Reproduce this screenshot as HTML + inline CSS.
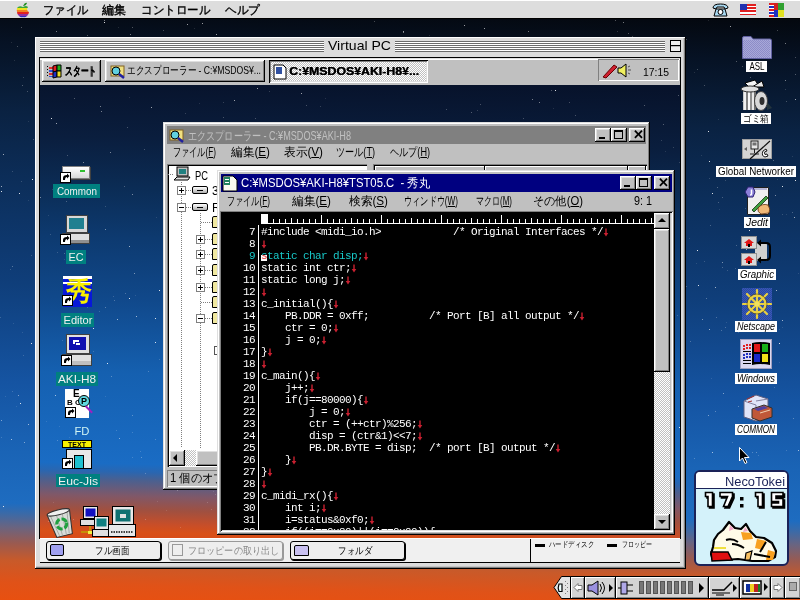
<!DOCTYPE html><html><head><meta charset="utf-8"><style>
*{margin:0;padding:0;box-sizing:border-box}
html,body{width:800px;height:600px;overflow:hidden}
body{position:relative;font-family:"Liberation Sans",sans-serif;font-size:12px;color:#000;
background:linear-gradient(181.3deg,#04080f 0px,#04080f 20px,#061224 60px,#0a2242 130px,#0c2e5a 200px,#0f3e7a 300px,#1554a2 400px,#1a64b6 470px,#1e6cc0 521px,#3a6aa8 531px,#6a6480 545px,#9a5a50 561px,#c85a2a 578px,#e05218 600px,#e85010 618px)}
.a{position:absolute}
.t{position:absolute;white-space:nowrap;line-height:1}
.fit{transform-origin:0 50%}
.fc{position:absolute;left:50%;top:0;white-space:nowrap;transform-origin:50% 50%;transform:translateX(-50%)}
.win{position:absolute;background:#c0c0c0;box-shadow:inset -1px -1px #000,inset 1px 1px #dfdfdf,inset -2px -2px #808080,inset 2px 2px #fff}
.btn{position:absolute;background:#c0c0c0;box-shadow:inset -1px -1px #000,inset 1px 1px #fff,inset -2px -2px #808080,inset 2px 2px #dfdfdf}
.tb{position:absolute;width:16px;height:14px;background:#c0c0c0;box-shadow:inset -1px -1px #000,inset 1px 1px #fff,inset -2px -2px #808080,inset 2px 2px #dfdfdf}
.lbl{position:absolute;background:#008080;color:#f0f0f0;font-size:11px;line-height:14px;white-space:nowrap}
.mlbl{position:absolute;background:#fff;color:#000;font-size:10px;line-height:11px;white-space:nowrap}
.ed{position:absolute;font-family:"Liberation Mono",monospace;font-size:11px;letter-spacing:-0.6px;line-height:12px;height:12px;color:#fff;white-space:pre}
.ln{position:absolute;width:33px;text-align:right;font-family:"Liberation Mono",monospace;font-size:11px;letter-spacing:-0.6px;line-height:12px;color:#fff;white-space:pre}
.c{color:#18c8c8}
.cs{position:absolute;top:577px;height:21px;background:#d4d4d4;box-shadow:inset 1px 1px #fff,inset -1px -1px #888}
</style></head><body><div class="a" style="left:0;top:0;width:1px;height:1px;box-shadow:331px 505px 0 rgba(255,255,255,0.45),404px 353px 0 rgba(255,255,255,0.3),74px 440px 0 rgba(255,255,255,0.3),374px 318px 0 rgba(255,255,255,0.3),519px 129px 0 rgba(255,255,255,0.3),88px 242px 0 rgba(255,255,255,0.85),71px 143px 0 rgba(255,255,255,0.3),564px 237px 0 rgba(255,255,255,0.3),579px 83px 0 rgba(255,255,255,0.45),645px 341px 0 rgba(255,255,255,0.3),590px 319px 0 rgba(255,255,255,0.85),50px 519px 0 rgba(255,255,255,0.45),47px 305px 0 rgba(255,255,255,0.45),296px 234px 0 rgba(255,255,255,0.45),553px 80px 0 rgba(255,255,255,0.6),573px 437px 0 rgba(255,255,255,0.45),105px 317px 0 rgba(255,255,255,0.45),381px 69px 0 rgba(255,255,255,0.3),577px 50px 0 rgba(255,255,255,0.45),508px 368px 0 rgba(255,255,255,0.85),795px 180px 0 rgba(255,255,255,0.85),599px 492px 0 rgba(255,255,255,0.85),370px 173px 0 rgba(255,255,255,0.45),184px 377px 0 rgba(255,255,255,0.45),83px 314px 0 rgba(255,255,255,0.6),537px 273px 0 rgba(255,255,255,0.6),746px 249px 0 rgba(255,255,255,0.6),623px 57px 0 rgba(255,255,255,0.3),524px 234px 0 rgba(255,255,255,0.45),775px 195px 0 rgba(255,255,255,0.45),500px 235px 0 rgba(255,255,255,0.3),684px 59px 0 rgba(255,255,255,0.6),348px 375px 0 rgba(255,255,255,0.6),608px 274px 0 rgba(255,255,255,0.85),70px 450px 0 rgba(255,255,255,0.3),276px 262px 0 rgba(255,255,255,0.3),62px 394px 0 rgba(255,255,255,0.6),662px 315px 0 rgba(255,255,255,0.85),291px 386px 0 rgba(255,255,255,0.85),684px 197px 0 rgba(255,255,255,0.3),472px 201px 0 rgba(255,255,255,0.45),625px 79px 0 rgba(255,255,255,0.85),60px 131px 0 rgba(255,255,255,0.6),132px 398px 0 rgba(255,255,255,0.45),407px 220px 0 rgba(255,255,255,0.85),82px 105px 0 rgba(255,255,255,0.85),411px 301px 0 rgba(255,255,255,0.6),140px 439px 0 rgba(255,255,255,0.85),563px 162px 0 rgba(255,255,255,0.85),367px 369px 0 rgba(255,255,255,0.85),236px 97px 0 rgba(255,255,255,0.3),180px 97px 0 rgba(255,255,255,0.45),674px 139px 0 rgba(255,255,255,0.3),496px 445px 0 rgba(255,255,255,0.45),269px 164px 0 rgba(255,255,255,0.3),149px 234px 0 rgba(255,255,255,0.6),624px 309px 0 rgba(255,255,255,0.6),128px 373px 0 rgba(255,255,255,0.3),467px 480px 0 rgba(255,255,255,0.85),407px 224px 0 rgba(255,255,255,0.85),106px 266px 0 rgba(255,255,255,0.85),63px 117px 0 rgba(255,255,255,0.3),213px 245px 0 rgba(255,255,255,0.45),112px 194px 0 rgba(255,255,255,0.3),104px 20px 0 rgba(255,255,255,0.45),549px 71px 0 rgba(255,255,255,0.6),628px 33px 0 rgba(255,255,255,0.3),212px 334px 0 rgba(255,255,255,0.85),152px 344px 0 rgba(255,255,255,0.6),355px 328px 0 rgba(255,255,255,0.6),485px 82px 0 rgba(255,255,255,0.3),499px 520px 0 rgba(255,255,255,0.85),491px 267px 0 rgba(255,255,255,0.6),87px 93px 0 rgba(255,255,255,0.3),767px 195px 0 rgba(255,255,255,0.6),490px 444px 0 rgba(255,255,255,0.45),528px 31px 0 rgba(255,255,255,0.45),540px 205px 0 rgba(255,255,255,0.45),706px 298px 0 rgba(255,255,255,0.3),776px 290px 0 rgba(255,255,255,0.6),658px 462px 0 rgba(255,255,255,0.3),712px 452px 0 rgba(255,255,255,0.6),530px 207px 0 rgba(255,255,255,0.45),364px 415px 0 rgba(255,255,255,0.45),545px 297px 0 rgba(255,255,255,0.6),651px 134px 0 rgba(255,255,255,0.45),245px 438px 0 rgba(255,255,255,0.85),757px 431px 0 rgba(255,255,255,0.45),204px 285px 0 rgba(255,255,255,0.85),364px 394px 0 rgba(255,255,255,0.3),28px 424px 0 rgba(255,255,255,0.6),483px 152px 0 rgba(255,255,255,0.45),709px 329px 0 rgba(255,255,255,0.6),457px 433px 0 rgba(255,255,255,0.6),373px 61px 0 rgba(255,255,255,0.45),104px 136px 0 rgba(255,255,255,0.85),201px 192px 0 rgba(255,255,255,0.45),494px 339px 0 rgba(255,255,255,0.3),490px 485px 0 rgba(255,255,255,0.6),658px 63px 0 rgba(255,255,255,0.3),397px 420px 0 rgba(255,255,255,0.45),489px 475px 0 rgba(255,255,255,0.45),444px 424px 0 rgba(255,255,255,0.6),88px 430px 0 rgba(255,255,255,0.85),474px 225px 0 rgba(255,255,255,0.3),742px 101px 0 rgba(255,255,255,0.45),130px 34px 0 rgba(255,255,255,0.45),604px 483px 0 rgba(255,255,255,0.85),671px 94px 0 rgba(255,255,255,0.85),673px 499px 0 rgba(255,255,255,0.6),159px 300px 0 rgba(255,255,255,0.45),21px 27px 0 rgba(255,255,255,0.3),539px 403px 0 rgba(255,255,255,0.45),444px 466px 0 rgba(255,255,255,0.45),216px 34px 0 rgba(255,255,255,0.6),217px 169px 0 rgba(255,255,255,0.45),782px 320px 0 rgba(255,255,255,0.6),265px 298px 0 rgba(255,255,255,0.85),134px 51px 0 rgba(255,255,255,0.6),469px 359px 0 rgba(255,255,255,0.85),513px 86px 0 rgba(255,255,255,0.45),536px 281px 0 rgba(255,255,255,0.3),450px 417px 0 rgba(255,255,255,0.45),623px 22px 0 rgba(255,255,255,0.45),176px 92px 0 rgba(255,255,255,0.85),633px 391px 0 rgba(255,255,255,0.3),569px 51px 0 rgba(255,255,255,0.6),698px 285px 0 rgba(255,255,255,0.85),795px 74px 0 rgba(255,255,255,0.3),254px 117px 0 rgba(255,255,255,0.6),43px 415px 0 rgba(255,255,255,0.3),519px 251px 0 rgba(255,255,255,0.3),778px 477px 0 rgba(255,255,255,0.3),453px 186px 0 rgba(255,255,255,0.45),709px 161px 0 rgba(255,255,255,0.85),520px 293px 0 rgba(255,255,255,0.85),519px 502px 0 rgba(255,255,255,0.45),715px 287px 0 rgba(255,255,255,0.6),572px 477px 0 rgba(255,255,255,0.45),458px 90px 0 rgba(255,255,255,0.85),124px 220px 0 rgba(255,255,255,0.85),323px 57px 0 rgba(255,255,255,0.45),438px 57px 0 rgba(255,255,255,0.45),685px 175px 0 rgba(255,255,255,0.3),795px 99px 0 rgba(255,255,255,0.6),146px 149px 0 rgba(255,255,255,0.45),478px 132px 0 rgba(255,255,255,0.3),407px 473px 0 rgba(255,255,255,0.85),166px 361px 0 rgba(255,255,255,0.45),165px 381px 0 rgba(255,255,255,0.85),527px 226px 0 rgba(255,255,255,0.6),431px 120px 0 rgba(255,255,255,0.6),326px 67px 0 rgba(255,255,255,0.6),19px 193px 0 rgba(255,255,255,0.85),451px 380px 0 rgba(255,255,255,0.3),393px 189px 0 rgba(255,255,255,0.6),524px 511px 0 rgba(255,255,255,0.3),115px 490px 0 rgba(255,255,255,0.45),107px 63px 0 rgba(255,255,255,0.6),278px 40px 0 rgba(255,255,255,0.45),276px 406px 0 rgba(255,255,255,0.45),432px 454px 0 rgba(255,255,255,0.6),415px 96px 0 rgba(255,255,255,0.85),717px 187px 0 rgba(255,255,255,0.3),285px 49px 0 rgba(255,255,255,0.45),435px 478px 0 rgba(255,255,255,0.3),275px 500px 0 rgba(255,255,255,0.3),649px 65px 0 rgba(255,255,255,0.6),85px 331px 0 rgba(255,255,255,0.45),68px 155px 0 rgba(255,255,255,0.3),464px 25px 0 rgba(255,255,255,0.6),566px 233px 0 rgba(255,255,255,0.6),636px 86px 0 rgba(255,255,255,0.3),539px 383px 0 rgba(255,255,255,0.45),112px 516px 0 rgba(255,255,255,0.45),268px 45px 0 rgba(255,255,255,0.45),206px 497px 0 rgba(255,255,255,0.6),643px 176px 0 rgba(255,255,255,0.45),296px 248px 0 rgba(255,255,255,0.45),277px 197px 0 rgba(255,255,255,0.3),256px 38px 0 rgba(255,255,255,0.3),18px 395px 0 rgba(255,255,255,0.45),526px 263px 0 rgba(255,255,255,0.45),457px 74px 0 rgba(255,255,255,0.85),672px 273px 0 rgba(255,255,255,0.85),518px 177px 0 rgba(255,255,255,0.45),235px 195px 0 rgba(255,255,255,0.45),723px 393px 0 rgba(255,255,255,0.45),414px 197px 0 rgba(255,255,255,0.3),132px 27px 0 rgba(255,255,255,0.3),640px 399px 0 rgba(255,255,255,0.6),441px 103px 0 rgba(255,255,255,0.3),86px 360px 0 rgba(255,255,255,0.85),518px 363px 0 rgba(255,255,255,0.6),613px 144px 0 rgba(255,255,255,0.6),46px 255px 0 rgba(255,255,255,0.45),161px 157px 0 rgba(255,255,255,0.85),3px 154px 0 rgba(255,255,255,0.6),336px 517px 0 rgba(255,255,255,0.6),250px 37px 0 rgba(255,255,255,0.6),223px 202px 0 rgba(255,255,255,0.45),1px 191px 0 rgba(255,255,255,0.85),85px 263px 0 rgba(255,255,255,0.6),514px 355px 0 rgba(255,255,255,0.45),254px 278px 0 rgba(255,255,255,0.3),93px 155px 0 rgba(255,255,255,0.3),147px 224px 0 rgba(255,255,255,0.3),403px 31px 0 rgba(255,255,255,0.6),311px 342px 0 rgba(255,255,255,0.45),86px 319px 0 rgba(255,255,255,0.45),673px 477px 0 rgba(255,255,255,0.85),782px 186px 0 rgba(255,255,255,0.85),153px 165px 0 rgba(255,255,255,0.45),44px 442px 0 rgba(255,255,255,0.85),751px 378px 0 rgba(255,255,255,0.45),536px 405px 0 rgba(255,255,255,0.3),702px 319px 0 rgba(255,255,255,0.45),87px 35px 0 rgba(255,255,255,0.3),136px 346px 0 rgba(255,255,255,0.6),107px 212px 0 rgba(255,255,255,0.85),571px 45px 0 rgba(255,255,255,0.3),641px 292px 0 rgba(255,255,255,0.45),501px 155px 0 rgba(255,255,255,0.3),467px 428px 0 rgba(255,255,255,0.3),766px 497px 0 rgba(255,255,255,0.3),675px 289px 0 rgba(255,255,255,0.3),763px 397px 0 rgba(255,255,255,0.85),258px 434px 0 rgba(255,255,255,0.3),271px 140px 0 rgba(255,255,255,0.45),236px 398px 0 rgba(255,255,255,0.85),505px 452px 0 rgba(255,255,255,0.85),78px 265px 0 rgba(255,255,255,0.6),785px 43px 0 rgba(255,255,255,0.45),79px 327px 0 rgba(255,255,255,0.45),339px 150px 0 rgba(255,255,255,0.6),636px 310px 0 rgba(255,255,255,0.45),12px 266px 0 rgba(255,255,255,0.3),497px 157px 0 rgba(255,255,255,0.3),708px 131px 0 rgba(255,255,255,0.85),297px 382px 0 rgba(255,255,255,0.6),475px 258px 0 rgba(255,255,255,0.85),785px 80px 0 rgba(255,255,255,0.45),319px 520px 0 rgba(255,255,255,0.3),484px 28px 0 rgba(255,255,255,0.6),469px 59px 0 rgba(255,255,255,0.85),275px 218px 0 rgba(255,255,255,0.45),215px 58px 0 rgba(255,255,255,0.3),145px 402px 0 rgba(255,255,255,0.6),368px 87px 0 rgba(255,255,255,0.6),115px 380px 0 rgba(255,255,255,0.6),236px 274px 0 rgba(255,255,255,0.85),403px 32px 0 rgba(255,255,255,0.45),3px 506px 0 rgba(255,255,255,0.85),697px 250px 0 rgba(255,255,255,0.85),309px 392px 0 rgba(255,255,255,0.45),426px 196px 0 rgba(255,255,255,0.85),323px 81px 0 rgba(255,255,255,0.6),1px 186px 0 rgba(255,255,255,0.6),407px 81px 0 rgba(255,255,255,0.45),730px 26px 0 rgba(255,255,255,0.6),259px 210px 0 rgba(255,255,255,0.3),402px 219px 0 rgba(255,255,255,0.3),369px 493px 0 rgba(255,255,255,0.85),773px 160px 0 rgba(255,255,255,0.3),287px 72px 0 rgba(255,255,255,0.3),677px 166px 0 rgba(255,255,255,0.45),255px 517px 0 rgba(255,255,255,0.6),446px 281px 0 rgba(255,255,255,0.6),194px 415px 0 rgba(255,255,255,0.6),438px 472px 0 rgba(255,255,255,0.3),779px 343px 0 rgba(255,255,255,0.85),567px 301px 0 rgba(255,255,255,0.45),736px 61px 0 rgba(255,255,255,0.3),749px 230px 0 rgba(255,255,255,0.85),629px 405px 0 rgba(255,255,255,0.45),659px 465px 0 rgba(255,255,255,0.6),497px 45px 0 rgba(255,255,255,0.45),174px 261px 0 rgba(255,255,255,0.85),351px 164px 0 rgba(255,255,255,0.6),261px 398px 0 rgba(255,255,255,0.6),415px 355px 0 rgba(255,255,255,0.45),308px 267px 0 rgba(255,255,255,0.85),122px 105px 0 rgba(255,255,255,0.45),76px 126px 0 rgba(255,255,255,0.85),563px 132px 0 rgba(255,255,255,0.85),340px 408px 0 rgba(255,255,255,0.85),437px 91px 0 rgba(255,255,255,0.45),249px 66px 0 rgba(255,255,255,0.45),350px 304px 0 rgba(255,255,255,0.3),326px 142px 0 rgba(255,255,255,0.6),264px 434px 0 rgba(255,255,255,0.45),20px 403px 0 rgba(255,255,255,0.85),392px 231px 0 rgba(255,255,255,0.45),385px 158px 0 rgba(255,255,255,0.6),770px 51px 0 rgba(255,255,255,0.85),284px 314px 0 rgba(255,255,255,0.6),128px 371px 0 rgba(255,255,255,0.45),94px 158px 0 rgba(255,255,255,0.45),393px 224px 0 rgba(255,255,255,0.85),442px 508px 0 rgba(255,255,255,0.6),22px 85px 0 rgba(255,255,255,0.3),435px 383px 0 rgba(255,255,255,0.85),601px 270px 0 rgba(255,255,255,0.3),74px 220px 0 rgba(255,255,255,0.85),459px 147px 0 rgba(255,255,255,0.3),229px 99px 0 rgba(255,255,255,0.45),534px 517px 0 rgba(255,255,255,0.3),739px 378px 0 rgba(255,255,255,0.85),87px 302px 0 rgba(255,255,255,0.3),1px 420px 0 rgba(255,255,255,0.45),238px 311px 0 rgba(255,255,255,0.3),660px 386px 0 rgba(255,255,255,0.6),131px 340px 0 rgba(255,255,255,0.6),540px 345px 0 rgba(255,255,255,0.85),715px 411px 0 rgba(255,255,255,0.3),101px 56px 0 rgba(255,255,255,0.6),537px 503px 0 rgba(255,255,255,0.45),397px 153px 0 rgba(255,255,255,0.45),615px 20px 0 rgba(255,255,255,0.3),550px 174px 0 rgba(255,255,255,0.85),285px 510px 0 rgba(255,255,255,0.6),660px 449px 0 rgba(255,255,255,0.45),486px 289px 0 rgba(255,255,255,0.45),560px 146px 0 rgba(255,255,255,0.3),421px 380px 0 rgba(255,255,255,0.6),56px 31px 0 rgba(255,255,255,0.45),510px 473px 0 rgba(255,255,255,0.85),83px 151px 0 rgba(255,255,255,0.45),683px 237px 0 rgba(255,255,255,0.6),232px 272px 0 rgba(255,255,255,0.3),712px 193px 0 rgba(255,255,255,0.85),371px 369px 0 rgba(255,255,255,0.85),202px 23px 0 rgba(255,255,255,0.6),756px 452px 0 rgba(255,255,255,0.3),210px 273px 0 rgba(255,255,255,0.45),319px 412px 0 rgba(255,255,255,0.45),236px 258px 0 rgba(255,255,255,0.45),271px 409px 0 rgba(255,255,255,0.6),111px 507px 0 rgba(255,255,255,0.85),624px 115px 0 rgba(255,255,255,0.45),496px 233px 0 rgba(255,255,255,0.3),609px 94px 0 rgba(255,255,255,0.85),55px 129px 0 rgba(255,255,255,0.3),610px 92px 0 rgba(255,255,255,0.85),53px 383px 0 rgba(255,255,255,0.3),188px 221px 0 rgba(255,255,255,0.85),729px 472px 0 rgba(255,255,255,0.6),750px 77px 0 rgba(255,255,255,0.3),169px 188px 0 rgba(255,255,255,0.45),189px 354px 0 rgba(255,255,255,0.85),32px 179px 0 rgba(255,255,255,0.85),382px 189px 0 rgba(255,255,255,0.85),173px 75px 0 rgba(255,255,255,0.3),80px 163px 0 rgba(255,255,255,0.3),359px 235px 0 rgba(255,255,255,0.3),574px 513px 0 rgba(255,255,255,0.45),389px 202px 0 rgba(255,255,255,0.6),442px 64px 0 rgba(255,255,255,0.3),722px 262px 0 rgba(255,255,255,0.45),381px 297px 0 rgba(255,255,255,0.85),197px 185px 0 rgba(255,255,255,0.6),755px 479px 0 rgba(255,255,255,0.85),31px 343px 0 rgba(255,255,255,0.85),253px 435px 0 rgba(255,255,255,0.85),41px 212px 0 rgba(255,255,255,0.3),475px 52px 0 rgba(255,255,255,0.3),263px 119px 0 rgba(255,255,255,0.3),620px 193px 0 rgba(255,255,255,0.6),278px 191px 0 rgba(255,255,255,0.3),268px 402px 0 rgba(255,255,255,0.6),282px 172px 0 rgba(255,255,255,0.3),738px 406px 0 rgba(255,255,255,0.3),24px 442px 0 rgba(255,255,255,0.45),109px 263px 0 rgba(255,255,255,0.85),794px 217px 0 rgba(255,255,255,0.6),440px 437px 0 rgba(255,255,255,0.85),135px 495px 0 rgba(255,255,255,0.85),187px 24px 0 rgba(255,255,255,0.6),708px 415px 0 rgba(255,255,255,0.45),621px 140px 0 rgba(255,255,255,0.6),327px 255px 0 rgba(255,255,255,0.6),610px 60px 0 rgba(255,255,255,0.45),401px 405px 0 rgba(255,255,255,0.45),253px 228px 0 rgba(255,255,255,0.3),665px 37px 0 rgba(255,255,255,0.85),565px 298px 0 rgba(255,255,255,0.6),164px 238px 0 rgba(255,255,255,0.3),73px 155px 0 rgba(255,255,255,0.3),213px 69px 0 rgba(255,255,255,0.85),510px 383px 0 rgba(255,255,255,0.85),177px 139px 0 rgba(255,255,255,0.45),426px 255px 0 rgba(255,255,255,0.45),765px 295px 0 rgba(255,255,255,0.3),798px 450px 0 rgba(255,255,255,0.6),300px 163px 0 rgba(255,255,255,0.6),381px 150px 0 rgba(255,255,255,0.6),203px 244px 0 rgba(255,255,255,0.45),190px 145px 0 rgba(255,255,255,0.45),157px 164px 0 rgba(255,255,255,0.45),334px 53px 0 rgba(255,255,255,0.85),257px 145px 0 rgba(255,255,255,0.45),665px 433px 0 rgba(255,255,255,0.3),669px 257px 0 rgba(255,255,255,0.3),104px 22px 0 rgba(255,255,255,0.85),236px 450px 0 rgba(255,255,255,0.85),382px 40px 0 rgba(255,255,255,0.6),238px 81px 0 rgba(255,255,255,0.3),194px 327px 0 rgba(255,255,255,0.45),76px 210px 0 rgba(255,255,255,0.45),459px 328px 0 rgba(255,255,255,0.6),793px 418px 0 rgba(255,255,255,0.3),108px 346px 0 rgba(255,255,255,0.6),222px 39px 0 rgba(255,255,255,0.6),348px 92px 0 rgba(255,255,255,0.3),208px 150px 0 rgba(255,255,255,0.3),613px 394px 0 rgba(255,255,255,0.45),11px 439px 0 rgba(255,255,255,0.6),418px 367px 0 rgba(255,255,255,0.6),189px 337px 0 rgba(255,255,255,0.6),79px 124px 0 rgba(255,255,255,0.3)"></div><div class="a" style="left:0;top:0;width:1px;height:1px;box-shadow:232px 209px 0 rgba(255,255,255,0.18),129px 118px 0 rgba(255,255,255,0.25),44px 63px 0 rgba(255,255,255,0.12),253px 435px 0 rgba(255,255,255,0.25),214px 225px 0 rgba(255,255,255,0.25),31px 255px 0 rgba(255,255,255,0.18),464px 219px 0 rgba(255,255,255,0.18),586px 118px 0 rgba(255,255,255,0.18),91px 268px 0 rgba(255,255,255,0.12),777px 30px 0 rgba(255,255,255,0.25),273px 286px 0 rgba(255,255,255,0.18),485px 214px 0 rgba(255,255,255,0.25),116px 359px 0 rgba(255,255,255,0.18),99px 436px 0 rgba(255,255,255,0.12),395px 337px 0 rgba(255,255,255,0.18),110px 358px 0 rgba(255,255,255,0.12),346px 140px 0 rgba(255,255,255,0.25),88px 274px 0 rgba(255,255,255,0.25),529px 126px 0 rgba(255,255,255,0.25),145px 330px 0 rgba(255,255,255,0.12),552px 39px 0 rgba(255,255,255,0.18),718px 119px 0 rgba(255,255,255,0.12),592px 253px 0 rgba(255,255,255,0.25),598px 471px 0 rgba(255,255,255,0.18),292px 305px 0 rgba(255,255,255,0.18),436px 89px 0 rgba(255,255,255,0.12),782px 327px 0 rgba(255,255,255,0.12),544px 373px 0 rgba(255,255,255,0.18),718px 202px 0 rgba(255,255,255,0.25),506px 277px 0 rgba(255,255,255,0.25),202px 178px 0 rgba(255,255,255,0.12),364px 290px 0 rgba(255,255,255,0.18),522px 356px 0 rgba(255,255,255,0.12),519px 379px 0 rgba(255,255,255,0.25),225px 196px 0 rgba(255,255,255,0.12),12px 171px 0 rgba(255,255,255,0.18),225px 156px 0 rgba(255,255,255,0.12),433px 150px 0 rgba(255,255,255,0.18),305px 447px 0 rgba(255,255,255,0.25),426px 109px 0 rgba(255,255,255,0.25),405px 79px 0 rgba(255,255,255,0.12),679px 456px 0 rgba(255,255,255,0.12),206px 412px 0 rgba(255,255,255,0.12),307px 79px 0 rgba(255,255,255,0.12),782px 214px 0 rgba(255,255,255,0.18),174px 311px 0 rgba(255,255,255,0.18),237px 91px 0 rgba(255,255,255,0.18),577px 248px 0 rgba(255,255,255,0.18),427px 61px 0 rgba(255,255,255,0.25),71px 167px 0 rgba(255,255,255,0.25),97px 37px 0 rgba(255,255,255,0.12),679px 74px 0 rgba(255,255,255,0.25),539px 204px 0 rgba(255,255,255,0.12),517px 269px 0 rgba(255,255,255,0.25),152px 329px 0 rgba(255,255,255,0.12),194px 28px 0 rgba(255,255,255,0.12),348px 217px 0 rgba(255,255,255,0.25),587px 81px 0 rgba(255,255,255,0.25),306px 199px 0 rgba(255,255,255,0.18),374px 21px 0 rgba(255,255,255,0.25),510px 127px 0 rgba(255,255,255,0.12),632px 36px 0 rgba(255,255,255,0.25),176px 111px 0 rgba(255,255,255,0.18),441px 246px 0 rgba(255,255,255,0.12),85px 122px 0 rgba(255,255,255,0.25),229px 274px 0 rgba(255,255,255,0.18),158px 215px 0 rgba(255,255,255,0.12),111px 317px 0 rgba(255,255,255,0.25),463px 351px 0 rgba(255,255,255,0.12),736px 245px 0 rgba(255,255,255,0.25),742px 66px 0 rgba(255,255,255,0.25),482px 308px 0 rgba(255,255,255,0.18),369px 253px 0 rgba(255,255,255,0.12),52px 121px 0 rgba(255,255,255,0.12),456px 77px 0 rgba(255,255,255,0.12),216px 391px 0 rgba(255,255,255,0.12),725px 327px 0 rgba(255,255,255,0.25),23px 355px 0 rgba(255,255,255,0.18),442px 290px 0 rgba(255,255,255,0.12),766px 406px 0 rgba(255,255,255,0.25),514px 439px 0 rgba(255,255,255,0.25),582px 122px 0 rgba(255,255,255,0.25),234px 185px 0 rgba(255,255,255,0.25),393px 400px 0 rgba(255,255,255,0.25),662px 120px 0 rgba(255,255,255,0.12),296px 333px 0 rgba(255,255,255,0.18),81px 400px 0 rgba(255,255,255,0.18),412px 134px 0 rgba(255,255,255,0.25),303px 60px 0 rgba(255,255,255,0.25),429px 401px 0 rgba(255,255,255,0.18),758px 455px 0 rgba(255,255,255,0.18),528px 174px 0 rgba(255,255,255,0.25),365px 421px 0 rgba(255,255,255,0.18),667px 453px 0 rgba(255,255,255,0.12),200px 268px 0 rgba(255,255,255,0.18),387px 319px 0 rgba(255,255,255,0.18),210px 168px 0 rgba(255,255,255,0.18),627px 216px 0 rgba(255,255,255,0.25),536px 373px 0 rgba(255,255,255,0.25),364px 440px 0 rgba(255,255,255,0.25),619px 319px 0 rgba(255,255,255,0.18),689px 238px 0 rgba(255,255,255,0.12),501px 441px 0 rgba(255,255,255,0.25),519px 449px 0 rgba(255,255,255,0.12),275px 103px 0 rgba(255,255,255,0.12),510px 395px 0 rgba(255,255,255,0.18),429px 419px 0 rgba(255,255,255,0.12),639px 444px 0 rgba(255,255,255,0.18),298px 160px 0 rgba(255,255,255,0.25),275px 161px 0 rgba(255,255,255,0.25),421px 145px 0 rgba(255,255,255,0.18),251px 146px 0 rgba(255,255,255,0.25),765px 254px 0 rgba(255,255,255,0.12),239px 436px 0 rgba(255,255,255,0.25),537px 444px 0 rgba(255,255,255,0.12),376px 274px 0 rgba(255,255,255,0.12),114px 218px 0 rgba(255,255,255,0.12),670px 107px 0 rgba(255,255,255,0.25),437px 43px 0 rgba(255,255,255,0.12),22px 332px 0 rgba(255,255,255,0.12),701px 155px 0 rgba(255,255,255,0.12),97px 256px 0 rgba(255,255,255,0.18),685px 164px 0 rgba(255,255,255,0.25),94px 84px 0 rgba(255,255,255,0.25),366px 462px 0 rgba(255,255,255,0.25),67px 183px 0 rgba(255,255,255,0.12),85px 459px 0 rgba(255,255,255,0.12),669px 431px 0 rgba(255,255,255,0.18),76px 437px 0 rgba(255,255,255,0.12),742px 38px 0 rgba(255,255,255,0.25),326px 133px 0 rgba(255,255,255,0.18),761px 203px 0 rgba(255,255,255,0.18),67px 286px 0 rgba(255,255,255,0.12),738px 332px 0 rgba(255,255,255,0.18),444px 101px 0 rgba(255,255,255,0.12),261px 477px 0 rgba(255,255,255,0.18),152px 240px 0 rgba(255,255,255,0.25),66px 71px 0 rgba(255,255,255,0.25),227px 62px 0 rgba(255,255,255,0.18),180px 192px 0 rgba(255,255,255,0.25),203px 75px 0 rgba(255,255,255,0.12),58px 304px 0 rgba(255,255,255,0.25),181px 442px 0 rgba(255,255,255,0.12),572px 347px 0 rgba(255,255,255,0.18),302px 471px 0 rgba(255,255,255,0.12),753px 276px 0 rgba(255,255,255,0.18),113px 308px 0 rgba(255,255,255,0.25),84px 90px 0 rgba(255,255,255,0.25),135px 135px 0 rgba(255,255,255,0.18),223px 228px 0 rgba(255,255,255,0.12),173px 89px 0 rgba(255,255,255,0.18),62px 375px 0 rgba(255,255,255,0.18),599px 361px 0 rgba(255,255,255,0.25),294px 232px 0 rgba(255,255,255,0.18),592px 371px 0 rgba(255,255,255,0.25),380px 374px 0 rgba(255,255,255,0.25),727px 270px 0 rgba(255,255,255,0.18),752px 452px 0 rgba(255,255,255,0.25),191px 178px 0 rgba(255,255,255,0.18),696px 263px 0 rgba(255,255,255,0.12),283px 275px 0 rgba(255,255,255,0.25),518px 293px 0 rgba(255,255,255,0.25),296px 433px 0 rgba(255,255,255,0.12),582px 289px 0 rgba(255,255,255,0.18),785px 89px 0 rgba(255,255,255,0.18),662px 263px 0 rgba(255,255,255,0.12),298px 221px 0 rgba(255,255,255,0.12),35px 464px 0 rgba(255,255,255,0.18),518px 171px 0 rgba(255,255,255,0.18),384px 377px 0 rgba(255,255,255,0.12),636px 93px 0 rgba(255,255,255,0.25),14px 60px 0 rgba(255,255,255,0.12),459px 316px 0 rgba(255,255,255,0.12),786px 450px 0 rgba(255,255,255,0.18),577px 342px 0 rgba(255,255,255,0.25),110px 210px 0 rgba(255,255,255,0.25),40px 327px 0 rgba(255,255,255,0.25),671px 208px 0 rgba(255,255,255,0.18),108px 183px 0 rgba(255,255,255,0.25),104px 264px 0 rgba(255,255,255,0.12),661px 140px 0 rgba(255,255,255,0.18),373px 315px 0 rgba(255,255,255,0.18),380px 405px 0 rgba(255,255,255,0.18),383px 400px 0 rgba(255,255,255,0.25),686px 39px 0 rgba(255,255,255,0.25),144px 383px 0 rgba(255,255,255,0.25),666px 180px 0 rgba(255,255,255,0.12),33px 139px 0 rgba(255,255,255,0.25),369px 267px 0 rgba(255,255,255,0.18),487px 307px 0 rgba(255,255,255,0.12),308px 91px 0 rgba(255,255,255,0.25),272px 422px 0 rgba(255,255,255,0.12),451px 399px 0 rgba(255,255,255,0.18),598px 370px 0 rgba(255,255,255,0.18),465px 450px 0 rgba(255,255,255,0.18),296px 226px 0 rgba(255,255,255,0.18),457px 356px 0 rgba(255,255,255,0.25),91px 275px 0 rgba(255,255,255,0.25),449px 194px 0 rgba(255,255,255,0.12),592px 397px 0 rgba(255,255,255,0.12),370px 387px 0 rgba(255,255,255,0.25),682px 253px 0 rgba(255,255,255,0.18),481px 313px 0 rgba(255,255,255,0.18),208px 299px 0 rgba(255,255,255,0.25),726px 322px 0 rgba(255,255,255,0.12),149px 278px 0 rgba(255,255,255,0.12),90px 300px 0 rgba(255,255,255,0.25),777px 179px 0 rgba(255,255,255,0.12),150px 345px 0 rgba(255,255,255,0.18),259px 471px 0 rgba(255,255,255,0.12),118px 27px 0 rgba(255,255,255,0.12),453px 387px 0 rgba(255,255,255,0.12),324px 180px 0 rgba(255,255,255,0.12),5px 396px 0 rgba(255,255,255,0.12),755px 85px 0 rgba(255,255,255,0.25),309px 347px 0 rgba(255,255,255,0.18),11px 42px 0 rgba(255,255,255,0.12),336px 182px 0 rgba(255,255,255,0.12),424px 140px 0 rgba(255,255,255,0.12),697px 69px 0 rgba(255,255,255,0.25),523px 123px 0 rgba(255,255,255,0.18),774px 387px 0 rgba(255,255,255,0.18),114px 237px 0 rgba(255,255,255,0.25),151px 58px 0 rgba(255,255,255,0.12),673px 383px 0 rgba(255,255,255,0.25),722px 197px 0 rgba(255,255,255,0.25),446px 356px 0 rgba(255,255,255,0.12),259px 229px 0 rgba(255,255,255,0.25),679px 121px 0 rgba(255,255,255,0.12),291px 52px 0 rgba(255,255,255,0.18),322px 376px 0 rgba(255,255,255,0.12),230px 48px 0 rgba(255,255,255,0.18),709px 178px 0 rgba(255,255,255,0.18),315px 287px 0 rgba(255,255,255,0.18),617px 31px 0 rgba(255,255,255,0.18),213px 380px 0 rgba(255,255,255,0.25),711px 378px 0 rgba(255,255,255,0.12),193px 77px 0 rgba(255,255,255,0.25),798px 273px 0 rgba(255,255,255,0.12),732px 442px 0 rgba(255,255,255,0.18),244px 354px 0 rgba(255,255,255,0.12),445px 197px 0 rgba(255,255,255,0.25),562px 370px 0 rgba(255,255,255,0.18),474px 465px 0 rgba(255,255,255,0.25),373px 336px 0 rgba(255,255,255,0.12),631px 104px 0 rgba(255,255,255,0.18),99px 133px 0 rgba(255,255,255,0.25),344px 332px 0 rgba(255,255,255,0.12),568px 142px 0 rgba(255,255,255,0.12),435px 390px 0 rgba(255,255,255,0.25),611px 122px 0 rgba(255,255,255,0.18),704px 85px 0 rgba(255,255,255,0.25),792px 156px 0 rgba(255,255,255,0.12),455px 185px 0 rgba(255,255,255,0.25),144px 358px 0 rgba(255,255,255,0.12),737px 324px 0 rgba(255,255,255,0.18),21px 181px 0 rgba(255,255,255,0.18),364px 413px 0 rgba(255,255,255,0.18),121px 80px 0 rgba(255,255,255,0.18),694px 458px 0 rgba(255,255,255,0.25),457px 230px 0 rgba(255,255,255,0.25),10px 269px 0 rgba(255,255,255,0.18),561px 386px 0 rgba(255,255,255,0.12),16px 406px 0 rgba(255,255,255,0.12),721px 330px 0 rgba(255,255,255,0.25),512px 183px 0 rgba(255,255,255,0.18),722px 267px 0 rgba(255,255,255,0.25),105px 333px 0 rgba(255,255,255,0.12),116px 47px 0 rgba(255,255,255,0.18),282px 61px 0 rgba(255,255,255,0.25),28px 121px 0 rgba(255,255,255,0.12),646px 58px 0 rgba(255,255,255,0.12),343px 196px 0 rgba(255,255,255,0.18),725px 180px 0 rgba(255,255,255,0.18),619px 101px 0 rgba(255,255,255,0.18),754px 427px 0 rgba(255,255,255,0.18),643px 476px 0 rgba(255,255,255,0.12),488px 448px 0 rgba(255,255,255,0.18),598px 410px 0 rgba(255,255,255,0.12),553px 361px 0 rgba(255,255,255,0.25),59px 283px 0 rgba(255,255,255,0.25),665px 225px 0 rgba(255,255,255,0.18),535px 262px 0 rgba(255,255,255,0.25),163px 80px 0 rgba(255,255,255,0.25),629px 281px 0 rgba(255,255,255,0.25),175px 188px 0 rgba(255,255,255,0.25),300px 310px 0 rgba(255,255,255,0.25),408px 339px 0 rgba(255,255,255,0.12),457px 303px 0 rgba(255,255,255,0.12),305px 101px 0 rgba(255,255,255,0.25),365px 200px 0 rgba(255,255,255,0.25),57px 367px 0 rgba(255,255,255,0.18),621px 160px 0 rgba(255,255,255,0.12),252px 302px 0 rgba(255,255,255,0.25),704px 261px 0 rgba(255,255,255,0.18),291px 379px 0 rgba(255,255,255,0.12),488px 300px 0 rgba(255,255,255,0.12),667px 52px 0 rgba(255,255,255,0.25),299px 54px 0 rgba(255,255,255,0.12),404px 71px 0 rgba(255,255,255,0.25),126px 113px 0 rgba(255,255,255,0.12),735px 268px 0 rgba(255,255,255,0.18),582px 141px 0 rgba(255,255,255,0.25),197px 244px 0 rgba(255,255,255,0.12),786px 214px 0 rgba(255,255,255,0.12),532px 198px 0 rgba(255,255,255,0.18),122px 289px 0 rgba(255,255,255,0.25),502px 313px 0 rgba(255,255,255,0.12),597px 68px 0 rgba(255,255,255,0.18),745px 208px 0 rgba(255,255,255,0.18),336px 74px 0 rgba(255,255,255,0.12),197px 466px 0 rgba(255,255,255,0.18),434px 310px 0 rgba(255,255,255,0.18),102px 373px 0 rgba(255,255,255,0.12),28px 200px 0 rgba(255,255,255,0.12),399px 249px 0 rgba(255,255,255,0.18),686px 286px 0 rgba(255,255,255,0.25),434px 324px 0 rgba(255,255,255,0.12),389px 260px 0 rgba(255,255,255,0.25),649px 233px 0 rgba(255,255,255,0.12),795px 57px 0 rgba(255,255,255,0.25),186px 140px 0 rgba(255,255,255,0.18),205px 161px 0 rgba(255,255,255,0.25),574px 449px 0 rgba(255,255,255,0.25),153px 128px 0 rgba(255,255,255,0.25),1px 437px 0 rgba(255,255,255,0.18),373px 64px 0 rgba(255,255,255,0.12),517px 183px 0 rgba(255,255,255,0.25),426px 390px 0 rgba(255,255,255,0.18),139px 132px 0 rgba(255,255,255,0.18),13px 323px 0 rgba(255,255,255,0.12),157px 133px 0 rgba(255,255,255,0.12),786px 101px 0 rgba(255,255,255,0.25),150px 273px 0 rgba(255,255,255,0.18),556px 218px 0 rgba(255,255,255,0.12),450px 383px 0 rgba(255,255,255,0.18),76px 216px 0 rgba(255,255,255,0.18),508px 243px 0 rgba(255,255,255,0.18),495px 394px 0 rgba(255,255,255,0.12),317px 42px 0 rgba(255,255,255,0.25),694px 72px 0 rgba(255,255,255,0.12),573px 337px 0 rgba(255,255,255,0.18),665px 380px 0 rgba(255,255,255,0.18),12px 391px 0 rgba(255,255,255,0.18),719px 209px 0 rgba(255,255,255,0.12),666px 341px 0 rgba(255,255,255,0.12),638px 53px 0 rgba(255,255,255,0.25),498px 46px 0 rgba(255,255,255,0.25),17px 46px 0 rgba(255,255,255,0.25),102px 183px 0 rgba(255,255,255,0.12),255px 438px 0 rgba(255,255,255,0.18),363px 430px 0 rgba(255,255,255,0.25),678px 295px 0 rgba(255,255,255,0.18),84px 143px 0 rgba(255,255,255,0.25),193px 280px 0 rgba(255,255,255,0.12),287px 70px 0 rgba(255,255,255,0.25),429px 35px 0 rgba(255,255,255,0.12),23px 77px 0 rgba(255,255,255,0.18),323px 95px 0 rgba(255,255,255,0.25),274px 135px 0 rgba(255,255,255,0.12),335px 473px 0 rgba(255,255,255,0.18),524px 214px 0 rgba(255,255,255,0.25),167px 459px 0 rgba(255,255,255,0.25),328px 424px 0 rgba(255,255,255,0.25),642px 377px 0 rgba(255,255,255,0.18),163px 30px 0 rgba(255,255,255,0.25),277px 394px 0 rgba(255,255,255,0.12),540px 42px 0 rgba(255,255,255,0.25),625px 430px 0 rgba(255,255,255,0.18),566px 92px 0 rgba(255,255,255,0.18),556px 327px 0 rgba(255,255,255,0.12),27px 91px 0 rgba(255,255,255,0.25),43px 389px 0 rgba(255,255,255,0.25),779px 329px 0 rgba(255,255,255,0.12),361px 159px 0 rgba(255,255,255,0.18),740px 362px 0 rgba(255,255,255,0.18),354px 380px 0 rgba(255,255,255,0.18),729px 476px 0 rgba(255,255,255,0.25),138px 206px 0 rgba(255,255,255,0.18),455px 334px 0 rgba(255,255,255,0.25),234px 407px 0 rgba(255,255,255,0.25),690px 341px 0 rgba(255,255,255,0.25),327px 442px 0 rgba(255,255,255,0.12),544px 152px 0 rgba(255,255,255,0.25),779px 362px 0 rgba(255,255,255,0.12),294px 195px 0 rgba(255,255,255,0.25),119px 159px 0 rgba(255,255,255,0.12),0px 317px 0 rgba(255,255,255,0.18),710px 225px 0 rgba(255,255,255,0.25),716px 317px 0 rgba(255,255,255,0.25),205px 455px 0 rgba(255,255,255,0.12),708px 20px 0 rgba(255,255,255,0.12),641px 306px 0 rgba(255,255,255,0.12),343px 448px 0 rgba(255,255,255,0.18),572px 343px 0 rgba(255,255,255,0.12),792px 212px 0 rgba(255,255,255,0.25),578px 125px 0 rgba(255,255,255,0.18),464px 406px 0 rgba(255,255,255,0.18),415px 389px 0 rgba(255,255,255,0.25),596px 464px 0 rgba(255,255,255,0.18)"></div><svg class="a" style="left:741px;top:35px" width="32" height="25"><path d="M1.5 3 Q1.5 1.5 3 1.5 L10 1.5 L12 4 L29 4 Q30.5 4 30.5 5.5 L30.5 23.5 L1.5 23.5 Z" fill="#a8a8d8" stroke="#6060a0"/></svg><div class="a" style="left:743px;top:40px;width:27px;height:18px;background:repeating-conic-gradient(#7070b8 0 25%,transparent 0 50%) 0 0/2px 2px;opacity:.5"></div><div class="mlbl" style="left:746px;top:61px;width:21px;height:11px;"><span class="fc" style="--w:15">ASL</span></div><svg class="a" style="left:740px;top:78px" width="34" height="34"><path d="M5 5 L15 2 L19 8 L10 10 Z" fill="#f4f4f4" stroke="#000"/><path d="M12 9 L22 3 L24 9 Z" fill="#e8e8e8" stroke="#000"/><rect x="3" y="13" width="13" height="19" fill="#c8c8c8"/><rect x="4" y="13" width="2" height="19" fill="#f0f0f0"/><rect x="8" y="13" width="2" height="19" fill="#f8f8f8"/><rect x="12" y="13" width="2" height="19" fill="#e8e8e8"/><rect x="6" y="13" width="2" height="19" fill="#808080"/><rect x="10" y="13" width="2" height="19" fill="#909090"/><rect x="14" y="13" width="2" height="19" fill="#707070"/><ellipse cx="10" cy="11" rx="9" ry="3" fill="#e0e0e0" stroke="#303030"/><ellipse cx="21" cy="23" rx="6.5" ry="9.5" fill="#d8d8d8" stroke="#404040"/><ellipse cx="22" cy="23" rx="2.5" ry="4" fill="#303030"/><path d="M27 24 L32 30 L27 32 Z" fill="#304040" opacity=".7"/></svg><div class="mlbl" style="left:741px;top:113px;width:30px;height:11px;"><span class="fc" style="--w:26">ゴミ箱</span></div><svg class="a" style="left:742px;top:139px" width="31" height="21"><rect x="0.5" y="0.5" width="29" height="19" fill="#d4d4d4" stroke="#a0a0a0"/><rect x="9" y="2" width="7" height="8" fill="#e8e8e8" stroke="#202020"/><rect x="10.5" y="3.5" width="4" height="3" fill="#707070"/><path d="M12.5 10 V14 M8 15 H17" stroke="#202020"/><path d="M28 2 L8 20" stroke="#101010" stroke-width="1.2"/><path d="M21 12 Q19 17 23 18 L26 17 L25 15 L23 15.5 Q22 14 23 12.5 L25 12 L24 10 Z" fill="#fff" stroke="#000" stroke-width=".9"/><path d="M2 10 L5 8 L5 12 Z" fill="#606060"/></svg><div class="mlbl" style="left:716px;top:166px;width:80px;height:11px;"><span class="fc" style="--w:76">Global Networker</span></div><svg class="a" style="left:742px;top:186px" width="31" height="30"><path d="M5.5 1.5 H26.5 V28.5 H5.5 Z" fill="#f0f0f0" stroke="#202020"/><path d="M8 3 H25" stroke="#8080c0"/><path d="M6 1 L11 1 L13 6 L11 11 L6 11 L3 6 Z" fill="#8a80d8" stroke="#2a2070"/><path d="M9.5 3.5 V8 Q9.5 9 8 9" stroke="#fff" stroke-width="1.5" fill="none"/><path d="M10 24 L24 10 L26 12 L12 26 Z" fill="#40a040" stroke="#103010" stroke-width=".8"/><path d="M16 22 Q20 17 26 19 Q29 23 27 27 L19 28 Q15 26 16 22 Z" fill="#f0b878" stroke="#603010" stroke-width=".8"/></svg><div class="mlbl" style="left:744px;top:217px;width:26px;height:11px;font-style:italic;"><span class="fc" style="--w:22">Jedit</span></div><svg class="a" style="left:741px;top:236px" width="32" height="31"><rect x="14" y="7" width="12" height="18" fill="#d0d0d0"/><rect x="0.5" y="0.5" width="15" height="12" fill="#d8d8d8" stroke="#909090"/><rect x="0.5" y="17.5" width="15" height="12" fill="#d8d8d8" stroke="#909090"/><path d="M3 7 L8 3 L13 7 Z M5 7 H11 V10 H5 Z" fill="#e01818"/><rect x="7" y="8" width="2" height="3" fill="#000"/><path d="M3 24 L8 20 L13 24 Z M5 24 H11 V27 H5 Z" fill="#e01818"/><rect x="7" y="25" width="2" height="3" fill="#000"/><path d="M19 7 H25 Q29 7 29 11 V20 Q29 24 25 24 H19" stroke="#000" stroke-width="2" fill="none"/><path d="M16 7 L20 3.5 V10.5 Z M16 24 L20 20.5 V27.5 Z" fill="#000"/></svg><div class="mlbl" style="left:738px;top:269px;width:38px;height:11px;font-style:italic;"><span class="fc" style="--w:34">Graphic</span></div><div class="a" style="left:742px;top:288px;width:30px;height:32px;background:repeating-conic-gradient(#3858b8 0 25%,#2a48a0 0 50%) 0 0/2px 2px"></div><svg class="a" style="left:742px;top:288px" width="30" height="32"><g stroke="#e8d040" stroke-width="2.2" stroke-linecap="round"><path d="M15 2 V30 M1 16 H29 M5 6 L25 26 M25 6 L5 26"/></g><circle cx="15" cy="16" r="8.5" fill="none" stroke="#e8d040" stroke-width="2.4"/><circle cx="15" cy="16" r="2.5" fill="#f0e060"/><g stroke="#5a4a10" stroke-width=".6" fill="none"><circle cx="15" cy="16" r="10"/></g></svg><div class="mlbl" style="left:735px;top:321px;width:42px;height:11px;font-style:italic;"><span class="fc" style="--w:38">Netscape</span></div><svg class="a" style="left:740px;top:339px" width="33" height="31"><rect x="0.5" y="0.5" width="31" height="29" fill="#dcd8f0" stroke="#a0a0c0"/><g fill="#e02020"><rect x="3" y="6" width="2" height="2"/><rect x="6" y="5" width="2" height="2"/><rect x="9" y="5" width="2" height="2"/><rect x="3" y="9" width="2" height="2"/><rect x="6" y="8" width="2" height="2"/><rect x="9" y="8" width="2" height="2"/></g><g fill="#2030c0"><rect x="3" y="15" width="2" height="2"/><rect x="6" y="14" width="2" height="2"/><rect x="9" y="14" width="2" height="2"/><rect x="3" y="18" width="2" height="2"/><rect x="6" y="17" width="2" height="2"/><rect x="9" y="17" width="2" height="2"/></g><g fill="#000"><rect x="3" y="12" width="8" height="1"/><rect x="3" y="21" width="8" height="1"/><rect x="3" y="24" width="8" height="1"/></g><path d="M12 4 Q20 2 30 4 V26 Q20 24 12 26 Z" fill="#000"/><rect x="14" y="5" width="6" height="8" fill="#e01818"/><rect x="22" y="5" width="6" height="8" fill="#18b018"/><rect x="14" y="15" width="6" height="8" fill="#1828c8"/><rect x="22" y="15" width="6" height="8" fill="#f0e018"/></svg><div class="mlbl" style="left:735px;top:373px;width:42px;height:11px;font-style:italic;"><span class="fc" style="--w:38">Windows</span></div><svg class="a" style="left:742px;top:393px" width="31" height="29"><path d="M2 8 L14 2 L26 6 L26 22 L14 28 L2 24 Z" fill="#e0e4f8" stroke="#606080"/><path d="M14 8 L26 6 M2 8 L14 12 V28" stroke="#8080a0" fill="none"/><path d="M5 6 L12 3 M6 9 L10 8" stroke="#a03030"/><path d="M10 16 L22 12 L30 15 L30 24 L18 28 L10 25 Z" fill="#c05838" stroke="#303030"/><path d="M12 16 L22 13 L26 15 L16 18 Z" fill="#5040a0"/><path d="M18 20 L28 17" stroke="#f0d0b0"/></svg><div class="mlbl" style="left:735px;top:424px;width:42px;height:11px;font-style:italic;"><span class="fc" style="--w:38">COMMON</span></div><svg class="a" style="left:739px;top:447px" width="12" height="18" viewBox="0 0 12 18"><path d="M0.5 0.5 L0.5 14 L3.5 11 L6 16.5 L8 15.5 L5.5 10.5 L10 10.5 Z" fill="#000" stroke="#fff" stroke-width="1"/></svg><div class="a" style="left:694px;top:470px;width:95px;height:96px;background:#d4f2fa;border:2px solid #1a2258;border-radius:6px;overflow:hidden"><div class="a" style="left:0;top:0;width:91px;height:17px;background:#fff;border-bottom:1px solid #1a2258"></div><div class="t fit" style="left:29px;top:4px;font-size:12px;color:#1a2258;--w:60;">NecoTokei</div></div><svg class="a" style="left:703px;top:491px" width="86" height="20"><g transform="translate(1,0)"><path d="M1.5 1.5 H8.5 V15.5 H4 V5.5 H1.5 Z" transform="translate(1.5,1.5)" fill="#000" stroke="#000" stroke-width="1.6"/><path d="M1.5 1.5 H8.5 V15.5 H4 V5.5 H1.5 Z" fill="#fff" stroke="#000" stroke-width="1.6"/></g><g transform="translate(16,0)"><path d="M1 1.5 H13.5 V5.5 L9 15.5 H4.5 L8.5 5.5 H1 Z" transform="translate(1.5,1.5)" fill="#000" stroke="#000" stroke-width="1.6"/><path d="M1 1.5 H13.5 V5.5 L9 15.5 H4.5 L8.5 5.5 H1 Z" fill="#fff" stroke="#000" stroke-width="1.6"/></g><rect x="37" y="6" width="3.5" height="3.5" fill="#000"/><rect x="37" y="13" width="3.5" height="3.5" fill="#000"/><g transform="translate(51,0)"><path d="M1.5 1.5 H8.5 V15.5 H4 V5.5 H1.5 Z" transform="translate(1.5,1.5)" fill="#000" stroke="#000" stroke-width="1.6"/><path d="M1.5 1.5 H8.5 V15.5 H4 V5.5 H1.5 Z" fill="#fff" stroke="#000" stroke-width="1.6"/></g><g transform="translate(67,0)"><path d="M1.5 1.5 H13 V5 H6 V7.5 H13 V15.5 H1.5 V12 H8.5 V10.5 H1.5 Z" transform="translate(1.5,1.5)" fill="#000" stroke="#000" stroke-width="1.6"/><path d="M1.5 1.5 H13 V5 H6 V7.5 H13 V15.5 H1.5 V12 H8.5 V10.5 H1.5 Z" fill="#fff" stroke="#000" stroke-width="1.6"/></g></svg><svg class="a" style="left:710px;top:520px" width="68" height="43" viewBox="0 0 68 43"><path d="M4 20 L8 14 L13 10 L19 2 L25 8 L31 9 L36 4 L40 11 L46 17 L54 18 L62 23 L66 31 L65 37 L58 41 L42 41 L28 39 L14 40 L3 40 L1 34 L3 27 Z" fill="#fffbe8" stroke="#000" stroke-width="2.2" stroke-linejoin="round"/><path d="M20 5 L24 9 L19 11 Z" fill="#f0a8c8"/><path d="M35 7 L38 11 L33 12 Z" fill="#f0a8c8"/><path d="M31 12 L41 13 L43 19 L33 20 Z" fill="#f8a020"/><path d="M47 19 L56 21 L53 30 L45 28 Z" fill="#f8a020"/><path d="M58 30 L65 32 L63 40 L56 40 Z" fill="#f8a020"/><path d="M56 22 L50 32 M44 34 L60 37 M16 20 Q22 18 28 22 M22 24 Q28 24 34 28" stroke="#000" stroke-width="2" fill="none"/><path d="M1 32 L18 32 L22 40 L2 41 Z" fill="#e01010" stroke="#000" stroke-width="1.5"/><path d="M4 28 L16 28" stroke="#f0e040" stroke-width="2"/><path d="M36 33 L42 31 L40 40 L35 40 Z" fill="#f8c060" stroke="#000" stroke-width="1.2"/></svg><div class="a" style="left:569px;top:576px;width:231px;height:23px;background:#000"></div><svg class="a" style="left:553px;top:576px" width="18" height="23"><path d="M1 11.5 L8.5 0.5 L17.5 0.5 L17.5 22.5 L8.5 22.5 Z" fill="#e4e4e4" stroke="#000"/><path d="M6 8 H9 V15.5 H6 Q4.5 11.5 6 8Z" fill="#f0ffff" stroke="#000" stroke-width="1.2"/><g fill="#808080"><rect x="12" y="5" width="1" height="1"/><rect x="12" y="9" width="1" height="1"/><rect x="12" y="13" width="1" height="1"/><rect x="12" y="17" width="1" height="1"/><rect x="14" y="7" width="1" height="1"/><rect x="14" y="11" width="1" height="1"/><rect x="14" y="15" width="1" height="1"/></g></svg><div class="cs" style="left:571px;width:13px"></div><div class="cs" style="left:585px;width:30px"></div><div class="cs" style="left:616px;width:92px"></div><div class="cs" style="left:709px;width:30px"></div><div class="cs" style="left:740px;width:30px"></div><div class="cs" style="left:771px;width:13px"></div><div class="cs" style="left:785px;width:15px"></div><svg class="a" style="left:573px;top:582px" width="10" height="11"><path d="M1 5.5 L5 1.5 L5 3.5 L9 3.5 L9 7.5 L5 7.5 L5 9.5 Z" fill="#fff" stroke="#777"/></svg><svg class="a" style="left:587px;top:580px" width="28" height="16"><path d="M1 5 L5 5 L11 1 L11 15 L5 11 L1 11 Z" fill="#9a90e0" stroke="#000"/><path d="M13 4 Q16 8 13 12 M15 2 Q20 8 15 14" stroke="#000" fill="none"/><path d="M22 4 L26 8 L22 12 Z" fill="#000"/></svg><svg class="a" style="left:618px;top:580px" width="20" height="16"><rect x="3" y="2" width="6" height="12" fill="#b0a8e8" stroke="#000"/><path d="M0 8 L3 8 M9 5 L15 5 M9 11 L15 11" stroke="#000"/></svg><div class="a" style="left:639px;top:581px;width:5px;height:13px;background:#777;border:1px solid #555"></div><div class="a" style="left:646px;top:581px;width:5px;height:13px;background:#777;border:1px solid #555"></div><div class="a" style="left:653px;top:581px;width:5px;height:13px;background:#777;border:1px solid #555"></div><div class="a" style="left:660px;top:581px;width:5px;height:13px;background:#777;border:1px solid #555"></div><div class="a" style="left:667px;top:581px;width:5px;height:13px;background:#777;border:1px solid #555"></div><div class="a" style="left:674px;top:581px;width:5px;height:13px;background:#777;border:1px solid #555"></div><div class="a" style="left:681px;top:581px;width:5px;height:13px;background:#777;border:1px solid #555"></div><div class="a" style="left:688px;top:581px;width:5px;height:13px;background:#777;border:1px solid #555"></div><svg class="a" style="left:699px;top:583px" width="6" height="10"><path d="M0 0 L5 5 L0 10 Z" fill="#000"/></svg><svg class="a" style="left:710px;top:580px" width="28" height="16"><path d="M2 10 L14 10 L22 2" stroke="#000" stroke-width="1.5" fill="none"/><path d="M2 13 L20 13 M6 15 L14 15" stroke="#000"/><path d="M23 4 L27 8 L23 12 Z" fill="#000"/></svg><svg class="a" style="left:741px;top:579px" width="28" height="17"><rect x="2" y="2" width="18" height="13" fill="#fff" stroke="#000" stroke-width="1.5"/><rect x="5" y="5" width="4" height="8" fill="#1030a0"/><rect x="9" y="5" width="4" height="8" fill="#f0d020"/><rect x="13" y="5" width="4" height="8" fill="#c02020"/><rect x="17" y="5" width="2" height="8" fill="#208020"/><path d="M23 4 L27 8 L23 12 Z" fill="#000"/></svg><svg class="a" style="left:773px;top:582px" width="10" height="11"><path d="M9 5.5 L5 1.5 L5 3.5 L1 3.5 L1 7.5 L5 7.5 L5 9.5 Z" fill="#fff" stroke="#777"/></svg><div class="a" style="left:789px;top:582px;width:8px;height:9px;background:#aaa;border:1px solid #666"></div><div class="a" style="left:0;top:0;width:800px;height:19px;background:#dddddd;border-top:1px solid #fff;border-bottom:1px solid #000"></div><svg class="a" style="left:16px;top:2px" width="14" height="16" viewBox="0 0 14 16"><path d="M7 4 Q9 0 11 1 Q10 4 7 4" fill="#1a8a1a"/><clipPath id="ap"><path d="M7 5 Q3 3 1 6 Q0 11 3 14 Q5 16 7 15 Q9 16 11 14 Q13 12 13 10 Q11 9 11 7 Q12 5 12 5 Q10 3 7 5Z"/></clipPath><g clip-path="url(#ap)"><rect x="0" y="3" width="14" height="3" fill="#3aa83a"/><rect x="0" y="6" width="14" height="2" fill="#f0e020"/><rect x="0" y="8" width="14" height="2" fill="#f08020"/><rect x="0" y="10" width="14" height="2" fill="#e02020"/><rect x="0" y="12" width="14" height="2" fill="#9030a0"/><rect x="0" y="14" width="14" height="3" fill="#3030c0"/></g></svg><div class="t fit" style="left:43px;top:4px;font-size:12px;-webkit-text-stroke:0.35px #000;--w:45;">ファイル</div><div class="t fit" style="left:102px;top:4px;font-size:12px;-webkit-text-stroke:0.35px #000;--w:24;">編集</div><div class="t fit" style="left:141px;top:4px;font-size:12px;-webkit-text-stroke:0.35px #000;--w:69;">コントロール</div><div class="t fit" style="left:225px;top:4px;font-size:12px;-webkit-text-stroke:0.35px #000;--w:35;">ヘルプ</div><svg class="a" style="left:712px;top:3px" width="17" height="14"><path d="M1 5 Q1 1 8.5 1 Q16 1 16 5 L13 6 L12 4 L5 4 L4 6 Z" fill="#a8d8f0" stroke="#000"/><path d="M4 6 L13 6 L15 13 L2 13 Z" fill="#a8d8f0" stroke="#000"/><circle cx="8.5" cy="9" r="2.5" fill="#fff" stroke="#000"/></svg><div class="a" style="left:740px;top:4px;width:16px;height:11px;background:repeating-linear-gradient(#e02020 0 1.6px,#fff 1.6px 3.2px)"></div><div class="a" style="left:740px;top:4px;width:7px;height:6px;background:#2030b0"></div><div class="a" style="left:769px;top:3px;width:15px;height:14px;background:conic-gradient(from 0deg at 60% 50%,#30a030 0 25%,#e0e020 0 50%,#2030c0 0 75%,#d02020 0 100%)"></div><div class="a" style="left:769px;top:3px;width:5px;height:14px;background:repeating-linear-gradient(#e02020 0 2px,#fff 2px 3px,#2030c0 3px 5px,#fff 5px 6px)"></div><div class="a" style="left:35px;top:37px;width:651px;height:532px;background:#000"></div><div class="a" style="left:35px;top:37px;width:650px;height:531px;background:#dcdcdc;box-shadow:inset 1px 1px #fff,inset -1px -1px #808080,inset -2px -2px #c4c4c4"></div><div class="a" style="left:40px;top:41px;width:625px;height:11px;background:repeating-linear-gradient(to bottom,#6a6a6a 0 1px,#fff 1px 2px)"></div><div class="a" style="left:324px;top:38px;width:71px;height:16px;background:#dcdcdc"></div><div class="t fit" style="left:328px;top:39px;font-size:13px;--w:63;">Virtual PC</div><div class="a" style="left:670px;top:40px;width:11px;height:12px;border:1px solid #000;background:linear-gradient(#f0f0f0 0 4px,#000 4px 5px,#bbb 5px 6px,#f0f0f0 6px)"></div><div class="a" style="left:39px;top:57px;width:642px;height:482px;background:#000"></div><div class="a" style="left:40px;top:58px;width:640px;height:480px;overflow:hidden;background:linear-gradient(181.25deg,#07122a 28px,#0a1e3e 92px,#0b2c55 142px,#0d3a70 192px,#10488a 252px,#1560b0 327px,#1a6cc4 418px,#2a66b0 426px,#4a6090 434px,#805868 450px,#a05040 464px,#c84e28 478px,#d85018 486px,#d84a18 494px)"><div class="a" style="left:0;top:0;width:1px;height:1px;box-shadow:463px 316px 0 rgba(255,255,255,0.85),462px 290px 0 rgba(255,255,255,0.45),189px 441px 0 rgba(255,255,255,0.85),628px 436px 0 rgba(255,255,255,0.45),96px 258px 0 rgba(255,255,255,0.6),145px 76px 0 rgba(255,255,255,0.3),609px 232px 0 rgba(255,255,255,0.85),630px 362px 0 rgba(255,255,255,0.45),638px 37px 0 rgba(255,255,255,0.3),60px 48px 0 rgba(255,255,255,0.45),247px 337px 0 rgba(255,255,255,0.3),475px 197px 0 rgba(255,255,255,0.85),605px 461px 0 rgba(255,255,255,0.45),531px 149px 0 rgba(255,255,255,0.6),511px 32px 0 rgba(255,255,255,0.3),468px 365px 0 rgba(255,255,255,0.6),416px 312px 0 rgba(255,255,255,0.3),260px 191px 0 rgba(255,255,255,0.45),525px 177px 0 rgba(255,255,255,0.3),71px 318px 0 rgba(255,255,255,0.3),410px 85px 0 rgba(255,255,255,0.6),395px 64px 0 rgba(255,255,255,0.3),0px 139px 0 rgba(255,255,255,0.45),53px 270px 0 rgba(255,255,255,0.85),406px 244px 0 rgba(255,255,255,0.3),579px 352px 0 rgba(255,255,255,0.45),276px 202px 0 rgba(255,255,255,0.3),318px 200px 0 rgba(255,255,255,0.3),419px 418px 0 rgba(255,255,255,0.3),137px 156px 0 rgba(255,255,255,0.3),11px 60px 0 rgba(255,255,255,0.85),498px 120px 0 rgba(255,255,255,0.45),458px 290px 0 rgba(255,255,255,0.45),134px 244px 0 rgba(255,255,255,0.85),119px 232px 0 rgba(255,255,255,0.85),217px 30px 0 rgba(255,255,255,0.6),606px 185px 0 rgba(255,255,255,0.3),215px 125px 0 rgba(255,255,255,0.85),616px 358px 0 rgba(255,255,255,0.3),43px 104px 0 rgba(255,255,255,0.45),452px 162px 0 rgba(255,255,255,0.3),624px 198px 0 rgba(255,255,255,0.6),395px 67px 0 rgba(255,255,255,0.3),92px 136px 0 rgba(255,255,255,0.45),15px 337px 0 rgba(255,255,255,0.6),380px 348px 0 rgba(255,255,255,0.85),130px 330px 0 rgba(255,255,255,0.85),588px 99px 0 rgba(255,255,255,0.85),187px 351px 0 rgba(255,255,255,0.45),318px 146px 0 rgba(255,255,255,0.45),194px 111px 0 rgba(255,255,255,0.45),397px 277px 0 rgba(255,255,255,0.3),431px 54px 0 rgba(255,255,255,0.3),111px 49px 0 rgba(255,255,255,0.6),244px 408px 0 rgba(255,255,255,0.85),263px 245px 0 rgba(255,255,255,0.85),300px 296px 0 rgba(255,255,255,0.45),70px 94px 0 rgba(255,255,255,0.45),490px 316px 0 rgba(255,255,255,0.3),286px 138px 0 rgba(255,255,255,0.45),16px 65px 0 rgba(255,255,255,0.6),421px 258px 0 rgba(255,255,255,0.45),61px 53px 0 rgba(255,255,255,0.45),288px 218px 0 rgba(255,255,255,0.45),94px 215px 0 rgba(255,255,255,0.45),461px 199px 0 rgba(255,255,255,0.45),604px 47px 0 rgba(255,255,255,0.3),486px 213px 0 rgba(255,255,255,0.6),34px 40px 0 rgba(255,255,255,0.3),493px 64px 0 rgba(255,255,255,0.6),326px 99px 0 rgba(255,255,255,0.3),77px 261px 0 rgba(255,255,255,0.6),45px 407px 0 rgba(255,255,255,0.45),349px 210px 0 rgba(255,255,255,0.3),484px 69px 0 rgba(255,255,255,0.85),30px 285px 0 rgba(255,255,255,0.3),639px 369px 0 rgba(255,255,255,0.85),388px 328px 0 rgba(255,255,255,0.3),623px 66px 0 rgba(255,255,255,0.3),92px 357px 0 rgba(255,255,255,0.3),263px 243px 0 rgba(255,255,255,0.6),397px 406px 0 rgba(255,255,255,0.85),451px 266px 0 rgba(255,255,255,0.3),531px 414px 0 rgba(255,255,255,0.3),317px 337px 0 rgba(255,255,255,0.3),492px 41px 0 rgba(255,255,255,0.45),115px 284px 0 rgba(255,255,255,0.85),261px 35px 0 rgba(255,255,255,0.6),308px 103px 0 rgba(255,255,255,0.45),530px 116px 0 rgba(255,255,255,0.6),452px 285px 0 rgba(255,255,255,0.45),334px 237px 0 rgba(255,255,255,0.6),203px 354px 0 rgba(255,255,255,0.85),205px 139px 0 rgba(255,255,255,0.85),224px 328px 0 rgba(255,255,255,0.6),214px 99px 0 rgba(255,255,255,0.45),508px 209px 0 rgba(255,255,255,0.3),65px 171px 0 rgba(255,255,255,0.45),115px 260px 0 rgba(255,255,255,0.85),281px 139px 0 rgba(255,255,255,0.85),391px 350px 0 rgba(255,255,255,0.85),322px 396px 0 rgba(255,255,255,0.85),328px 68px 0 rgba(255,255,255,0.3),284px 341px 0 rgba(255,255,255,0.3),287px 322px 0 rgba(255,255,255,0.6),316px 362px 0 rgba(255,255,255,0.3),139px 237px 0 rgba(255,255,255,0.85),194px 42px 0 rgba(255,255,255,0.6),243px 428px 0 rgba(255,255,255,0.45),48px 352px 0 rgba(255,255,255,0.3),457px 85px 0 rgba(255,255,255,0.6),79px 380px 0 rgba(255,255,255,0.45),204px 451px 0 rgba(255,255,255,0.85),262px 121px 0 rgba(255,255,255,0.3),483px 303px 0 rgba(255,255,255,0.3),183px 145px 0 rgba(255,255,255,0.6),354px 306px 0 rgba(255,255,255,0.45),402px 464px 0 rgba(255,255,255,0.45),89px 240px 0 rgba(255,255,255,0.85),133px 260px 0 rgba(255,255,255,0.85),201px 350px 0 rgba(255,255,255,0.3),385px 311px 0 rgba(255,255,255,0.6),474px 197px 0 rgba(255,255,255,0.45),101px 399px 0 rgba(255,255,255,0.3),218px 154px 0 rgba(255,255,255,0.85),89px 188px 0 rgba(255,255,255,0.6),268px 397px 0 rgba(255,255,255,0.3),356px 288px 0 rgba(255,255,255,0.3),38px 255px 0 rgba(255,255,255,0.6),563px 245px 0 rgba(255,255,255,0.6),499px 44px 0 rgba(255,255,255,0.45),65px 249px 0 rgba(255,255,255,0.3),177px 302px 0 rgba(255,255,255,0.6),143px 270px 0 rgba(255,255,255,0.45),528px 400px 0 rgba(255,255,255,0.85),504px 326px 0 rgba(255,255,255,0.3),226px 254px 0 rgba(255,255,255,0.6),575px 357px 0 rgba(255,255,255,0.45),535px 293px 0 rgba(255,255,255,0.6),319px 373px 0 rgba(255,255,255,0.85),624px 136px 0 rgba(255,255,255,0.6),144px 308px 0 rgba(255,255,255,0.6),586px 284px 0 rgba(255,255,255,0.45),420px 304px 0 rgba(255,255,255,0.3),515px 32px 0 rgba(255,255,255,0.85),28px 305px 0 rgba(255,255,255,0.3),528px 235px 0 rgba(255,255,255,0.3),502px 77px 0 rgba(255,255,255,0.45),67px 305px 0 rgba(255,255,255,0.85),423px 439px 0 rgba(255,255,255,0.85)"></div><div class="a" style="left:0;top:0;width:1px;height:1px;box-shadow:485px 167px 0 rgba(255,255,255,0.25),541px 371px 0 rgba(255,255,255,0.18),146px 225px 0 rgba(255,255,255,0.12),383px 277px 0 rgba(255,255,255,0.18),471px 383px 0 rgba(255,255,255,0.25),233px 315px 0 rgba(255,255,255,0.12),639px 104px 0 rgba(255,255,255,0.18),376px 113px 0 rgba(255,255,255,0.18),215px 60px 0 rgba(255,255,255,0.25),204px 68px 0 rgba(255,255,255,0.25),345px 378px 0 rgba(255,255,255,0.18),89px 39px 0 rgba(255,255,255,0.12),521px 144px 0 rgba(255,255,255,0.12),433px 257px 0 rgba(255,255,255,0.12),433px 99px 0 rgba(255,255,255,0.25),320px 348px 0 rgba(255,255,255,0.25),167px 386px 0 rgba(255,255,255,0.12),568px 117px 0 rgba(255,255,255,0.25),85px 235px 0 rgba(255,255,255,0.25),428px 372px 0 rgba(255,255,255,0.25),480px 274px 0 rgba(255,255,255,0.25),393px 307px 0 rgba(255,255,255,0.12),84px 128px 0 rgba(255,255,255,0.25),267px 212px 0 rgba(255,255,255,0.18),394px 374px 0 rgba(255,255,255,0.18),116px 159px 0 rgba(255,255,255,0.12),343px 216px 0 rgba(255,255,255,0.18),523px 323px 0 rgba(255,255,255,0.25),183px 44px 0 rgba(255,255,255,0.18),440px 46px 0 rgba(255,255,255,0.25),26px 143px 0 rgba(255,255,255,0.25),437px 52px 0 rgba(255,255,255,0.18),209px 425px 0 rgba(255,255,255,0.25),105px 415px 0 rgba(255,255,255,0.25),225px 121px 0 rgba(255,255,255,0.12),280px 48px 0 rgba(255,255,255,0.18),283px 285px 0 rgba(255,255,255,0.18),616px 356px 0 rgba(255,255,255,0.25),53px 293px 0 rgba(255,255,255,0.18),377px 136px 0 rgba(255,255,255,0.18),288px 263px 0 rgba(255,255,255,0.18),492px 152px 0 rgba(255,255,255,0.12),475px 311px 0 rgba(255,255,255,0.18),186px 126px 0 rgba(255,255,255,0.25),225px 340px 0 rgba(255,255,255,0.12),274px 424px 0 rgba(255,255,255,0.18),183px 153px 0 rgba(255,255,255,0.12),513px 50px 0 rgba(255,255,255,0.12),633px 89px 0 rgba(255,255,255,0.18),559px 287px 0 rgba(255,255,255,0.12),24px 195px 0 rgba(255,255,255,0.25),286px 357px 0 rgba(255,255,255,0.12),235px 431px 0 rgba(255,255,255,0.25),514px 274px 0 rgba(255,255,255,0.18),362px 164px 0 rgba(255,255,255,0.25),455px 408px 0 rgba(255,255,255,0.12),459px 179px 0 rgba(255,255,255,0.25),47px 172px 0 rgba(255,255,255,0.18),527px 357px 0 rgba(255,255,255,0.25),455px 390px 0 rgba(255,255,255,0.12),291px 296px 0 rgba(255,255,255,0.18),29px 379px 0 rgba(255,255,255,0.12),27px 97px 0 rgba(255,255,255,0.25),272px 245px 0 rgba(255,255,255,0.12),247px 132px 0 rgba(255,255,255,0.18),483px 60px 0 rgba(255,255,255,0.25),583px 349px 0 rgba(255,255,255,0.25),264px 419px 0 rgba(255,255,255,0.12),427px 250px 0 rgba(255,255,255,0.25),95px 237px 0 rgba(255,255,255,0.12),594px 315px 0 rgba(255,255,255,0.18),377px 356px 0 rgba(255,255,255,0.25),394px 318px 0 rgba(255,255,255,0.12),17px 382px 0 rgba(255,255,255,0.25),159px 45px 0 rgba(255,255,255,0.12),74px 242px 0 rgba(255,255,255,0.25),204px 434px 0 rgba(255,255,255,0.18),100px 393px 0 rgba(255,255,255,0.18),193px 189px 0 rgba(255,255,255,0.18),554px 281px 0 rgba(255,255,255,0.25),625px 93px 0 rgba(255,255,255,0.12),547px 336px 0 rgba(255,255,255,0.25),403px 327px 0 rgba(255,255,255,0.12),73px 238px 0 rgba(255,255,255,0.18),331px 72px 0 rgba(255,255,255,0.25),340px 102px 0 rgba(255,255,255,0.25),92px 399px 0 rgba(255,255,255,0.18),318px 386px 0 rgba(255,255,255,0.12),446px 217px 0 rgba(255,255,255,0.12),30px 137px 0 rgba(255,255,255,0.18),637px 257px 0 rgba(255,255,255,0.18),183px 59px 0 rgba(255,255,255,0.25),608px 204px 0 rgba(255,255,255,0.18),244px 197px 0 rgba(255,255,255,0.12),229px 33px 0 rgba(255,255,255,0.18),375px 173px 0 rgba(255,255,255,0.12),442px 181px 0 rgba(255,255,255,0.12),528px 105px 0 rgba(255,255,255,0.25),340px 113px 0 rgba(255,255,255,0.25),475px 229px 0 rgba(255,255,255,0.25),512px 461px 0 rgba(255,255,255,0.25),255px 265px 0 rgba(255,255,255,0.18),50px 455px 0 rgba(255,255,255,0.12),417px 305px 0 rgba(255,255,255,0.25),404px 296px 0 rgba(255,255,255,0.25),450px 369px 0 rgba(255,255,255,0.12),108px 313px 0 rgba(255,255,255,0.25),319px 209px 0 rgba(255,255,255,0.25),17px 194px 0 rgba(255,255,255,0.18),369px 353px 0 rgba(255,255,255,0.18),174px 99px 0 rgba(255,255,255,0.18),231px 440px 0 rgba(255,255,255,0.25),137px 158px 0 rgba(255,255,255,0.18),47px 249px 0 rgba(255,255,255,0.18),292px 239px 0 rgba(255,255,255,0.25),613px 174px 0 rgba(255,255,255,0.18),621px 194px 0 rgba(255,255,255,0.12),128px 162px 0 rgba(255,255,255,0.25),33px 461px 0 rgba(255,255,255,0.25),623px 437px 0 rgba(255,255,255,0.18),422px 247px 0 rgba(255,255,255,0.25),269px 203px 0 rgba(255,255,255,0.18),388px 282px 0 rgba(255,255,255,0.18),409px 447px 0 rgba(255,255,255,0.12),173px 433px 0 rgba(255,255,255,0.12),260px 86px 0 rgba(255,255,255,0.18),535px 57px 0 rgba(255,255,255,0.25),367px 406px 0 rgba(255,255,255,0.18),140px 469px 0 rgba(255,255,255,0.18),216px 413px 0 rgba(255,255,255,0.12),568px 187px 0 rgba(255,255,255,0.12),13px 444px 0 rgba(255,255,255,0.12),200px 113px 0 rgba(255,255,255,0.12),303px 127px 0 rgba(255,255,255,0.12),319px 309px 0 rgba(255,255,255,0.12),621px 82px 0 rgba(255,255,255,0.18),510px 304px 0 rgba(255,255,255,0.12),459px 80px 0 rgba(255,255,255,0.25),6px 363px 0 rgba(255,255,255,0.12),402px 288px 0 rgba(255,255,255,0.18),300px 269px 0 rgba(255,255,255,0.18),397px 466px 0 rgba(255,255,255,0.18),529px 44px 0 rgba(255,255,255,0.25),285px 40px 0 rgba(255,255,255,0.12),503px 417px 0 rgba(255,255,255,0.18),105px 461px 0 rgba(255,255,255,0.25),437px 310px 0 rgba(255,255,255,0.18),622px 221px 0 rgba(255,255,255,0.12),132px 208px 0 rgba(255,255,255,0.12),237px 85px 0 rgba(255,255,255,0.18),86px 442px 0 rgba(255,255,255,0.12),8px 157px 0 rgba(255,255,255,0.12),115px 381px 0 rgba(255,255,255,0.25),578px 345px 0 rgba(255,255,255,0.25),28px 333px 0 rgba(255,255,255,0.12),601px 441px 0 rgba(255,255,255,0.18),211px 265px 0 rgba(255,255,255,0.18),433px 362px 0 rgba(255,255,255,0.25),323px 439px 0 rgba(255,255,255,0.12),400px 74px 0 rgba(255,255,255,0.25),621px 202px 0 rgba(255,255,255,0.12),370px 102px 0 rgba(255,255,255,0.18),125px 278px 0 rgba(255,255,255,0.25),139px 372px 0 rgba(255,255,255,0.18),12px 131px 0 rgba(255,255,255,0.12),126px 277px 0 rgba(255,255,255,0.18),348px 452px 0 rgba(255,255,255,0.18),325px 203px 0 rgba(255,255,255,0.25),390px 421px 0 rgba(255,255,255,0.18),350px 129px 0 rgba(255,255,255,0.25),548px 347px 0 rgba(255,255,255,0.18),65px 148px 0 rgba(255,255,255,0.18),394px 166px 0 rgba(255,255,255,0.25),577px 94px 0 rgba(255,255,255,0.25),450px 411px 0 rgba(255,255,255,0.18),258px 205px 0 rgba(255,255,255,0.18),104px 91px 0 rgba(255,255,255,0.25),600px 353px 0 rgba(255,255,255,0.18),176px 215px 0 rgba(255,255,255,0.25),159px 335px 0 rgba(255,255,255,0.25),591px 171px 0 rgba(255,255,255,0.18),343px 188px 0 rgba(255,255,255,0.18),363px 199px 0 rgba(255,255,255,0.25),612px 265px 0 rgba(255,255,255,0.12),177px 349px 0 rgba(255,255,255,0.18),209px 195px 0 rgba(255,255,255,0.25),375px 345px 0 rgba(255,255,255,0.18),145px 181px 0 rgba(255,255,255,0.18),340px 366px 0 rgba(255,255,255,0.25),406px 51px 0 rgba(255,255,255,0.25),336px 361px 0 rgba(255,255,255,0.25),75px 457px 0 rgba(255,255,255,0.25),538px 81px 0 rgba(255,255,255,0.18),167px 444px 0 rgba(255,255,255,0.18),92px 374px 0 rgba(255,255,255,0.18),175px 436px 0 rgba(255,255,255,0.18),234px 174px 0 rgba(255,255,255,0.12),238px 126px 0 rgba(255,255,255,0.12),280px 356px 0 rgba(255,255,255,0.12),217px 331px 0 rgba(255,255,255,0.12),490px 410px 0 rgba(255,255,255,0.18),469px 97px 0 rgba(255,255,255,0.18),401px 255px 0 rgba(255,255,255,0.18),398px 214px 0 rgba(255,255,255,0.18),201px 152px 0 rgba(255,255,255,0.25),538px 431px 0 rgba(255,255,255,0.25),496px 286px 0 rgba(255,255,255,0.25),630px 464px 0 rgba(255,255,255,0.25),347px 211px 0 rgba(255,255,255,0.18),313px 99px 0 rgba(255,255,255,0.12),76px 372px 0 rgba(255,255,255,0.18),399px 374px 0 rgba(255,255,255,0.18),492px 107px 0 rgba(255,255,255,0.25),532px 245px 0 rgba(255,255,255,0.25),321px 121px 0 rgba(255,255,255,0.18),432px 241px 0 rgba(255,255,255,0.12),145px 55px 0 rgba(255,255,255,0.18),119px 301px 0 rgba(255,255,255,0.18),251px 111px 0 rgba(255,255,255,0.12),124px 428px 0 rgba(255,255,255,0.25),388px 292px 0 rgba(255,255,255,0.18),314px 337px 0 rgba(255,255,255,0.12),197px 104px 0 rgba(255,255,255,0.12),389px 470px 0 rgba(255,255,255,0.25),262px 300px 0 rgba(255,255,255,0.18),193px 94px 0 rgba(255,255,255,0.12),564px 85px 0 rgba(255,255,255,0.12),266px 47px 0 rgba(255,255,255,0.25),559px 257px 0 rgba(255,255,255,0.12),501px 346px 0 rgba(255,255,255,0.25),189px 458px 0 rgba(255,255,255,0.25),59px 253px 0 rgba(255,255,255,0.18),22px 282px 0 rgba(255,255,255,0.18),367px 460px 0 rgba(255,255,255,0.18),87px 69px 0 rgba(255,255,255,0.25),534px 262px 0 rgba(255,255,255,0.25),562px 234px 0 rgba(255,255,255,0.25),8px 463px 0 rgba(255,255,255,0.25),381px 242px 0 rgba(255,255,255,0.12),24px 201px 0 rgba(255,255,255,0.12),540px 377px 0 rgba(255,255,255,0.25),283px 189px 0 rgba(255,255,255,0.12),306px 238px 0 rgba(255,255,255,0.18),527px 412px 0 rgba(255,255,255,0.18),536px 71px 0 rgba(255,255,255,0.25),46px 176px 0 rgba(255,255,255,0.25),372px 384px 0 rgba(255,255,255,0.18),354px 72px 0 rgba(255,255,255,0.25),126px 452px 0 rgba(255,255,255,0.12),117px 443px 0 rgba(255,255,255,0.12),65px 338px 0 rgba(255,255,255,0.12),137px 432px 0 rgba(255,255,255,0.25),545px 115px 0 rgba(255,255,255,0.12),561px 453px 0 rgba(255,255,255,0.18),228px 456px 0 rgba(255,255,255,0.18),19px 368px 0 rgba(255,255,255,0.12),289px 264px 0 rgba(255,255,255,0.25),466px 388px 0 rgba(255,255,255,0.18),171px 451px 0 rgba(255,255,255,0.18),10px 176px 0 rgba(255,255,255,0.18)"></div></div><div class="a" style="left:40px;top:58px;width:640px;height:27px;background:#c0c0c0;box-shadow:inset 0 1px #dfdfdf,inset 0 2px #fff"></div><div class="btn" style="left:42px;top:60px;width:59px;height:22px"></div><svg class="a" style="left:46px;top:64px" width="17" height="15"><g fill="#000"><rect x="1" y="2" width="1" height="1"/><rect x="1" y="5" width="1" height="1"/><rect x="1" y="8" width="1" height="1"/><rect x="1" y="11" width="1" height="1"/></g><rect x="3" y="3" width="4" height="2" fill="#e03030"/><rect x="3" y="6" width="4" height="2" fill="#3050e0"/><rect x="3" y="9" width="4" height="2" fill="#e03030"/><rect x="3" y="12" width="4" height="1" fill="#3050e0"/><path d="M7 2 L11 1 L11 7 L7 8Z" fill="#e02020" stroke="#000"/><path d="M11 1 L15 1 L15 7 L11 7Z" fill="#20b020" stroke="#000"/><path d="M7 8 L11 7 L11 13 L7 14Z" fill="#2030c0" stroke="#000"/><path d="M11 7 L15 7 L15 13 L11 13Z" fill="#f0e020" stroke="#000"/></svg><div class="t fit" style="left:65px;top:65px;font-size:12px;font-weight:bold;text-shadow:0.7px 0 #000;--w:31;">スタート</div><div class="btn" style="left:105px;top:60px;width:160px;height:22px"></div><svg class="a" style="left:109px;top:63px" width="17" height="16"><rect x="2" y="3" width="13" height="10" fill="#f0e080" stroke="#806020"/><circle cx="7" cy="8" r="4" fill="#60d0e0" stroke="#000"/><path d="M10 11 L15 15" stroke="#2020a0" stroke-width="2.5"/></svg><div class="t fit" style="left:127px;top:65px;font-size:11px;--w:134;">エクスプローラー - C:¥MSDOS¥...</div><div class="a" style="left:269px;top:60px;width:159px;height:23px;background:repeating-conic-gradient(#fff 0 25%,#c0c0c0 0 50%) 0 0/2px 2px;box-shadow:inset 1px 1px #000,inset -1px -1px #fff,inset 2px 2px #808080,inset -2px -2px #dfdfdf"></div><svg class="a" style="left:273px;top:64px" width="14" height="16"><path d="M1 1 L10 1 L13 4 L13 15 L1 15Z" fill="#fff" stroke="#000"/><rect x="3" y="3" width="6" height="7" fill="#3050a0"/></svg><div class="t fit" style="left:289px;top:66px;font-size:11px;font-weight:bold;text-shadow:0.4px 0 #000;--w:130;">C:¥MSDOS¥AKI-H8¥...</div><div class="a" style="left:598px;top:59px;width:81px;height:22px;box-shadow:inset 1px 1px #808080,inset -1px -1px #fff"></div><svg class="a" style="left:601px;top:62px" width="34" height="17"><path d="M2 15 L13 3 L16 5 L5 16Z" fill="#d02030" stroke="#600"/><path d="M17 6 L20 6 L25 2 L25 15 L20 11 L17 11Z" fill="#f0f060" stroke="#000"/><path d="M27 5 L29 4 M27 8 L30 8 M27 11 L29 12" stroke="#555"/></svg><div class="t fit" style="left:643px;top:67px;font-size:11px;--w:26;">17:15</div><div class="a" style="left:62px;top:166px;width:28px;height:13px;background:linear-gradient(#fff,#d8d8d8);border:1px solid #808080;box-shadow:1px 1px #404040"></div><div class="a" style="left:80px;top:170px;width:5px;height:2px;background:#30c030"></div><svg class="a" style="left:60px;top:172px" width="11" height="11"><rect x="0.5" y="0.5" width="10" height="10" fill="#fff" stroke="#000"/><path d="M3 8 L3 6 Q3 3 7 3 L7 1.5 L9.5 4 L7 6.5 L7 5 Q5 5 5 8Z" fill="#000"/></svg><div class="lbl" style="left:53px;top:184px;width:47px;height:14px"><span class="fc" style="--w:40">Common</span></div><div class="a" style="left:66px;top:215px;width:22px;height:18px;background:#d8d8d8;border:1px solid #404040"></div><div class="a" style="left:69px;top:218px;width:15px;height:11px;background:#208090"></div><div class="a" style="left:62px;top:233px;width:28px;height:11px;background:#e0e0e0;border:1px solid #404040;box-shadow:inset 0 -3px #909090"></div><svg class="a" style="left:60px;top:234px" width="11" height="11"><rect x="0.5" y="0.5" width="10" height="10" fill="#fff" stroke="#000"/><path d="M3 8 L3 6 Q3 3 7 3 L7 1.5 L9.5 4 L7 6.5 L7 5 Q5 5 5 8Z" fill="#000"/></svg><div class="lbl" style="left:66px;top:250px;width:20px;height:14px"><span class="fc" style="--w:15">EC</span></div><div class="a" style="left:63px;top:276px;width:29px;height:31px;background:#0818d8;box-shadow:inset 0 3px #fff,inset 0 6px #0818d8,inset 0 8px #fff"></div><div class="t" style="left:66px;top:278px;font-size:26px;color:#f8f000;font-weight:bold">秀</div><svg class="a" style="left:62px;top:295px" width="11" height="11"><rect x="0.5" y="0.5" width="10" height="10" fill="#fff" stroke="#000"/><path d="M3 8 L3 6 Q3 3 7 3 L7 1.5 L9.5 4 L7 6.5 L7 5 Q5 5 5 8Z" fill="#000"/></svg><div class="lbl" style="left:61px;top:313px;width:33px;height:14px"><span class="fc" style="--w:29">Editor</span></div><div class="a" style="left:66px;top:334px;width:24px;height:20px;background:#e0e0e0;border:1px solid #404040"></div><div class="a" style="left:69px;top:337px;width:17px;height:13px;background:#1010b0"></div><div class="a" style="left:73px;top:340px;width:6px;height:4px;background:#fff"></div><div class="a" style="left:75px;top:342px;width:6px;height:4px;background:#fff;border:1px solid #1010b0"></div><div class="a" style="left:62px;top:354px;width:30px;height:12px;background:#e0e0e0;border:1px solid #404040;box-shadow:inset 0 -4px #c0c0c0"></div><svg class="a" style="left:61px;top:355px" width="11" height="11"><rect x="0.5" y="0.5" width="10" height="10" fill="#fff" stroke="#000"/><path d="M3 8 L3 6 Q3 3 7 3 L7 1.5 L9.5 4 L7 6.5 L7 5 Q5 5 5 8Z" fill="#000"/></svg><div class="lbl" style="left:56px;top:372px;width:42px;height:14px"><span class="fc" style="--w:38">AKI-H8</span></div><div class="a" style="left:65px;top:389px;width:24px;height:29px;background:#fff"></div><div class="t" style="left:73px;top:389px;font-size:10px;font-weight:bold">E</div><div class="t" style="left:67px;top:399px;font-size:8px;font-weight:bold">B O</div><div class="a" style="left:78px;top:395px;width:12px;height:12px;border-radius:50%;background:#60d8e0;border:1px solid #000"></div><div class="t" style="left:81px;top:397px;font-size:9px;font-weight:bold">P</div><div class="a" style="left:88px;top:405px;width:2px;height:9px;background:#a020c0;transform:rotate(-45deg)"></div><svg class="a" style="left:65px;top:407px" width="11" height="11"><rect x="0.5" y="0.5" width="10" height="10" fill="#fff" stroke="#000"/><path d="M3 8 L3 6 Q3 3 7 3 L7 1.5 L9.5 4 L7 6.5 L7 5 Q5 5 5 8Z" fill="#000"/></svg><div class="lbl" style="left:73px;top:424px;width:17px;height:13px;background:transparent;color:#d0f4f4"><span class="fc" style="--w:15">FD</span></div><div class="a" style="left:62px;top:440px;width:30px;height:8px;background:#f8f000;border:1px solid #000;font-size:7px;line-height:7px;text-align:center;font-weight:bold">TEXT</div><div class="a" style="left:66px;top:449px;width:26px;height:20px;background:#e8e8e8;border:1px solid #000"></div><div class="a" style="left:74px;top:455px;width:10px;height:14px;background:#20c0d0;border:1px solid #000"></div><svg class="a" style="left:62px;top:458px" width="11" height="11"><rect x="0.5" y="0.5" width="10" height="10" fill="#fff" stroke="#000"/><path d="M3 8 L3 6 Q3 3 7 3 L7 1.5 L9.5 4 L7 6.5 L7 5 Q5 5 5 8Z" fill="#000"/></svg><div class="lbl" style="left:56px;top:474px;width:44px;height:13px"><span class="fc" style="--w:40">Euc-Jis</span></div><svg class="a" style="left:46px;top:505px" width="30" height="33"><g transform="rotate(-14 15 16)"><path d="M3 7 L26 7 L23 31 L7 31 Z" fill="#d8dcd8" stroke="#303030"/><path d="M6 9 L10 30 M12 9 L13 30 M18 9 L17 30 M23 9 L20 30" stroke="#a0a4a0" stroke-width=".8"/><ellipse cx="14.5" cy="7" rx="11.5" ry="2.5" fill="#f0f0f0" stroke="#303030"/><circle cx="15" cy="19" r="5" fill="none" stroke="#20a040" stroke-width="3" stroke-dasharray="6 2"/></g></svg><svg class="a" style="left:80px;top:505px" width="57" height="33"><path d="M10 21 V27 M1 27 H24" stroke="#c0a000" stroke-width="1.5"/><rect x="8" y="26" width="4" height="3" fill="#f0f040"/><rect x="3.5" y="1.5" width="14" height="12" fill="#e8e8e8" stroke="#000"/><rect x="5.5" y="3.5" width="10" height="8" fill="#1010c0"/><rect x="0.5" y="14.5" width="17" height="6" fill="#e0e0e0" stroke="#000"/><rect x="14.5" y="11.5" width="14" height="13" fill="#e8e8e8" stroke="#000"/><rect x="16.5" y="13.5" width="10" height="8" fill="#108080"/><rect x="12.5" y="24.5" width="17" height="7" fill="#e0e0e0" stroke="#000"/><rect x="32.5" y="1.5" width="21" height="18" fill="#e8e8e8" stroke="#000"/><rect x="35.5" y="4.5" width="15" height="12" fill="#107070"/><rect x="40" y="9" width="6" height="4" fill="#e0e0e0"/><rect x="28.5" y="19.5" width="27" height="12" fill="#e8e8e8" stroke="#000"/><path d="M31 27 H53" stroke="#404040" stroke-width="2" stroke-dasharray="1.5 1"/></svg><div class="win" style="left:163px;top:122px;width:487px;height:368px"></div><div class="a" style="left:167px;top:126px;width:479px;height:18px;background:#808080"></div><svg class="a" style="left:168px;top:127px" width="17" height="16"><rect x="2" y="3" width="13" height="10" fill="#f0e080" stroke="#806020"/><circle cx="7" cy="8" r="4" fill="#60d0e0" stroke="#000"/><path d="M10 11 L15 15" stroke="#2020a0" stroke-width="2.5"/></svg><div class="t fit" style="left:188px;top:130px;font-size:12px;color:#c0c0c0;--w:163;">エクスプローラー - C:¥MSDOS¥AKI-H8</div><div class="tb" style="left:595px;top:128px"></div><div class="tb" style="left:611px;top:128px"></div><div class="tb" style="left:629px;top:128px"></div><div class="a" style="left:599px;top:137px;width:6px;height:2px;background:#000"></div><div class="a" style="left:614px;top:130px;width:9px;height:9px;border:1px solid #000;border-top-width:2px"></div><div class="t" style="left:633px;top:128px;font-size:13px;font-weight:bold">✕</div><div class="t fit" style="left:173px;top:146px;font-size:12px;--w:43;">ファイル(<u>F</u>)</div><div class="t fit" style="left:231px;top:146px;font-size:12px;--w:39;">編集(<u>E</u>)</div><div class="t fit" style="left:284px;top:146px;font-size:12px;--w:39;">表示(<u>V</u>)</div><div class="t fit" style="left:336px;top:146px;font-size:12px;--w:39;">ツール(<u>T</u>)</div><div class="t fit" style="left:390px;top:146px;font-size:12px;--w:40;">ヘルプ(<u>H</u>)</div><div class="a" style="left:167px;top:164px;width:200px;height:303px;background:#fff;box-shadow:inset 1px 1px #808080,inset 2px 2px #000"></div><div class="a" style="left:373px;top:164px;width:274px;height:303px;background:#fff;box-shadow:inset 1px 1px #808080,inset 2px 2px #000"></div><div class="a" style="left:375px;top:166px;width:110px;height:8px;background:#c0c0c0;box-shadow:inset -1px -1px #000,inset 1px 1px #fff"></div><div class="a" style="left:485px;top:166px;width:143px;height:8px;background:#c0c0c0;box-shadow:inset -1px -1px #000,inset 1px 1px #fff"></div><div class="a" style="left:628px;top:166px;width:18px;height:8px;background:#c0c0c0;box-shadow:inset -1px -1px #000,inset 1px 1px #fff"></div><div class="a" style="left:181px;top:182px;width:1px;height:266px;background:repeating-linear-gradient(#808080 0 1px,transparent 1px 2px)"></div><div class="a" style="left:200px;top:213px;width:1px;height:235px;background:repeating-linear-gradient(#808080 0 1px,transparent 1px 2px)"></div><svg class="a" style="left:173px;top:166px" width="18" height="16"><rect x="4" y="1" width="11" height="9" fill="#c0c0c0" stroke="#000"/><rect x="6" y="3" width="7" height="5" fill="#208080"/><path d="M1 14 L4 11 L17 11 L15 14 Z" fill="#e0e0e0" stroke="#000"/></svg><div class="t fit" style="left:195px;top:170px;font-size:12px;--w:13;">PC</div><div class="a" style="left:168px;top:174px;width:6px;height:1px;background:repeating-linear-gradient(to right,#808080 0 1px,transparent 1px 2px)"></div><div class="a" style="left:186px;top:190px;width:6px;height:1px;background:repeating-linear-gradient(to right,#808080 0 1px,transparent 1px 2px)"></div><div class="a" style="left:186px;top:207px;width:6px;height:1px;background:repeating-linear-gradient(to right,#808080 0 1px,transparent 1px 2px)"></div><div class="a" style="left:177px;top:186px;width:9px;height:9px;background:#fff;border:1px solid #808080"></div><div class="a" style="left:179px;top:190px;width:5px;height:1px;background:#000"></div><div class="a" style="left:181px;top:188px;width:1px;height:5px;background:#000"></div><div class="a" style="left:192px;top:186px;width:16px;height:8px;background:linear-gradient(#fff,#b0b0b0);border:1px solid #000;border-radius:2px"></div><div class="a" style="left:197px;top:190px;width:6px;height:1px;background:#000"></div><div class="t" style="left:212px;top:185px;font-size:12px">3</div><div class="a" style="left:177px;top:203px;width:9px;height:9px;background:#fff;border:1px solid #808080"></div><div class="a" style="left:179px;top:207px;width:5px;height:1px;background:#000"></div><div class="a" style="left:192px;top:203px;width:16px;height:8px;background:linear-gradient(#fff,#b0b0b0);border:1px solid #000;border-radius:2px"></div><div class="a" style="left:197px;top:207px;width:6px;height:1px;background:#000"></div><div class="t" style="left:212px;top:202px;font-size:12px">R</div><div class="a" style="left:201px;top:222px;width:12px;height:1px;background:repeating-linear-gradient(to right,#808080 0 1px,transparent 1px 2px)"></div><div class="a" style="left:212px;top:216px;width:16px;height:12px;background:#f0e8a0;border:1px solid #000;border-radius:2px 0 0 0"></div><div class="a" style="left:201px;top:239px;width:12px;height:1px;background:repeating-linear-gradient(to right,#808080 0 1px,transparent 1px 2px)"></div><div class="a" style="left:196px;top:235px;width:9px;height:9px;background:#fff;border:1px solid #808080"></div><div class="a" style="left:198px;top:239px;width:5px;height:1px;background:#000"></div><div class="a" style="left:200px;top:237px;width:1px;height:5px;background:#000"></div><div class="a" style="left:212px;top:233px;width:16px;height:12px;background:#f0e8a0;border:1px solid #000;border-radius:2px 0 0 0"></div><div class="a" style="left:201px;top:254px;width:12px;height:1px;background:repeating-linear-gradient(to right,#808080 0 1px,transparent 1px 2px)"></div><div class="a" style="left:196px;top:250px;width:9px;height:9px;background:#fff;border:1px solid #808080"></div><div class="a" style="left:198px;top:254px;width:5px;height:1px;background:#000"></div><div class="a" style="left:200px;top:252px;width:1px;height:5px;background:#000"></div><div class="a" style="left:212px;top:248px;width:16px;height:12px;background:#f0e8a0;border:1px solid #000;border-radius:2px 0 0 0"></div><div class="a" style="left:201px;top:270px;width:12px;height:1px;background:repeating-linear-gradient(to right,#808080 0 1px,transparent 1px 2px)"></div><div class="a" style="left:196px;top:266px;width:9px;height:9px;background:#fff;border:1px solid #808080"></div><div class="a" style="left:198px;top:270px;width:5px;height:1px;background:#000"></div><div class="a" style="left:200px;top:268px;width:1px;height:5px;background:#000"></div><div class="a" style="left:212px;top:264px;width:16px;height:12px;background:#f0e8a0;border:1px solid #000;border-radius:2px 0 0 0"></div><div class="a" style="left:201px;top:287px;width:12px;height:1px;background:repeating-linear-gradient(to right,#808080 0 1px,transparent 1px 2px)"></div><div class="a" style="left:196px;top:283px;width:9px;height:9px;background:#fff;border:1px solid #808080"></div><div class="a" style="left:198px;top:287px;width:5px;height:1px;background:#000"></div><div class="a" style="left:200px;top:285px;width:1px;height:5px;background:#000"></div><div class="a" style="left:212px;top:281px;width:16px;height:12px;background:#f0e8a0;border:1px solid #000;border-radius:2px 0 0 0"></div><div class="a" style="left:201px;top:302px;width:12px;height:1px;background:repeating-linear-gradient(to right,#808080 0 1px,transparent 1px 2px)"></div><div class="a" style="left:212px;top:296px;width:16px;height:12px;background:#f0e8a0;border:1px solid #000;border-radius:2px 0 0 0"></div><div class="a" style="left:201px;top:318px;width:12px;height:1px;background:repeating-linear-gradient(to right,#808080 0 1px,transparent 1px 2px)"></div><div class="a" style="left:196px;top:314px;width:9px;height:9px;background:#fff;border:1px solid #808080"></div><div class="a" style="left:198px;top:318px;width:5px;height:1px;background:#000"></div><div class="a" style="left:212px;top:312px;width:16px;height:12px;background:#f0e8a0;border:1px solid #000;border-radius:2px 0 0 0"></div><div class="a" style="left:214px;top:346px;width:4px;height:9px;border:1px solid #555;border-right:none"></div><div class="a" style="left:169px;top:450px;width:204px;height:16px;background:repeating-conic-gradient(#fff 0 25%,#c0c0c0 0 50%) 0 0/2px 2px"></div><div class="btn" style="left:169px;top:450px;width:16px;height:16px"></div><svg class="a" style="left:173px;top:454px" width="6" height="8"><path d="M4 0 L0 4 L4 8Z" fill="#000"/></svg><div class="btn" style="left:196px;top:450px;width:40px;height:16px"></div><div class="a" style="left:167px;top:470px;width:200px;height:17px;box-shadow:inset 1px 1px #808080,inset -1px -1px #fff"></div><div class="t fit" style="left:170px;top:472px;font-size:12px;--w:100;">1 個のオブジェクト</div><div class="win" style="left:217px;top:170px;width:458px;height:365px"></div><div class="a" style="left:221px;top:174px;width:451px;height:18px;background:#000080"></div><svg class="a" style="left:222px;top:175px" width="16" height="17"><path d="M1 1 L11 1 L15 5 L15 16 L1 16Z" fill="#f8f8f0" stroke="#000"/><rect x="2" y="2" width="6" height="8" fill="#208060"/><rect x="3" y="4" width="4" height="1" fill="#fff"/><rect x="3" y="7" width="4" height="1" fill="#fff"/></svg><div class="t fit" style="left:241px;top:177px;font-size:12px;color:#fff;--w:189;">C:¥MSDOS¥AKI-H8¥TST05.C &nbsp;- 秀丸</div><div class="tb" style="left:620px;top:176px"></div><div class="tb" style="left:636px;top:176px"></div><div class="tb" style="left:654px;top:176px"></div><div class="a" style="left:624px;top:185px;width:6px;height:2px;background:#000"></div><div class="a" style="left:639px;top:178px;width:9px;height:9px;border:1px solid #000;border-top-width:2px"></div><div class="t" style="left:658px;top:176px;font-size:13px;font-weight:bold">✕</div><div class="t fit" style="left:227px;top:195px;font-size:12px;--w:43;">ファイル(<u>F</u>)</div><div class="t fit" style="left:292px;top:195px;font-size:12px;--w:39;">編集(<u>E</u>)</div><div class="t fit" style="left:349px;top:195px;font-size:12px;--w:39;">検索(<u>S</u>)</div><div class="t fit" style="left:404px;top:195px;font-size:12px;--w:54;">ウィンドウ(<u>W</u>)</div><div class="t fit" style="left:476px;top:195px;font-size:12px;--w:36;">マクロ(<u>M</u>)</div><div class="t fit" style="left:533px;top:195px;font-size:12px;--w:50;">その他(<u>O</u>)</div><div class="t fit" style="left:634px;top:195px;font-size:12px;--w:18;">9: 1</div><div class="a" style="left:220px;top:211px;width:453px;height:321px;box-shadow:inset 1px 1px #808080,inset -1px -1px #fff,inset 2px 2px #000,inset -2px -2px #dfdfdf"></div><div class="a" style="left:222px;top:213px;width:432px;height:317px;background:#000"></div><div class="a" style="left:261px;top:214px;width:7px;height:10px;background:#fff"></div><div class="a" style="left:261px;top:223px;width:393px;height:1px;background:#fff"></div><div class="a" style="left:267px;top:219px;width:1px;height:5px;background:#fff"></div><div class="a" style="left:273px;top:219px;width:1px;height:5px;background:#fff"></div><div class="a" style="left:279px;top:219px;width:1px;height:5px;background:#fff"></div><div class="a" style="left:285px;top:219px;width:1px;height:5px;background:#fff"></div><div class="a" style="left:291px;top:218px;width:1px;height:6px;background:#fff"></div><div class="a" style="left:297px;top:219px;width:1px;height:5px;background:#fff"></div><div class="a" style="left:303px;top:219px;width:1px;height:5px;background:#fff"></div><div class="a" style="left:309px;top:219px;width:1px;height:5px;background:#fff"></div><div class="a" style="left:315px;top:219px;width:1px;height:5px;background:#fff"></div><div class="a" style="left:321px;top:215px;width:1px;height:9px;background:#fff"></div><div class="a" style="left:327px;top:219px;width:1px;height:5px;background:#fff"></div><div class="a" style="left:333px;top:219px;width:1px;height:5px;background:#fff"></div><div class="a" style="left:339px;top:219px;width:1px;height:5px;background:#fff"></div><div class="a" style="left:345px;top:219px;width:1px;height:5px;background:#fff"></div><div class="a" style="left:351px;top:218px;width:1px;height:6px;background:#fff"></div><div class="a" style="left:357px;top:219px;width:1px;height:5px;background:#fff"></div><div class="a" style="left:363px;top:219px;width:1px;height:5px;background:#fff"></div><div class="a" style="left:369px;top:219px;width:1px;height:5px;background:#fff"></div><div class="a" style="left:375px;top:219px;width:1px;height:5px;background:#fff"></div><div class="a" style="left:381px;top:215px;width:1px;height:9px;background:#fff"></div><div class="a" style="left:387px;top:219px;width:1px;height:5px;background:#fff"></div><div class="a" style="left:393px;top:219px;width:1px;height:5px;background:#fff"></div><div class="a" style="left:399px;top:219px;width:1px;height:5px;background:#fff"></div><div class="a" style="left:405px;top:219px;width:1px;height:5px;background:#fff"></div><div class="a" style="left:411px;top:218px;width:1px;height:6px;background:#fff"></div><div class="a" style="left:417px;top:219px;width:1px;height:5px;background:#fff"></div><div class="a" style="left:423px;top:219px;width:1px;height:5px;background:#fff"></div><div class="a" style="left:429px;top:219px;width:1px;height:5px;background:#fff"></div><div class="a" style="left:435px;top:219px;width:1px;height:5px;background:#fff"></div><div class="a" style="left:441px;top:215px;width:1px;height:9px;background:#fff"></div><div class="a" style="left:447px;top:219px;width:1px;height:5px;background:#fff"></div><div class="a" style="left:453px;top:219px;width:1px;height:5px;background:#fff"></div><div class="a" style="left:459px;top:219px;width:1px;height:5px;background:#fff"></div><div class="a" style="left:465px;top:219px;width:1px;height:5px;background:#fff"></div><div class="a" style="left:471px;top:218px;width:1px;height:6px;background:#fff"></div><div class="a" style="left:477px;top:219px;width:1px;height:5px;background:#fff"></div><div class="a" style="left:483px;top:219px;width:1px;height:5px;background:#fff"></div><div class="a" style="left:489px;top:219px;width:1px;height:5px;background:#fff"></div><div class="a" style="left:495px;top:219px;width:1px;height:5px;background:#fff"></div><div class="a" style="left:501px;top:215px;width:1px;height:9px;background:#fff"></div><div class="a" style="left:507px;top:219px;width:1px;height:5px;background:#fff"></div><div class="a" style="left:513px;top:219px;width:1px;height:5px;background:#fff"></div><div class="a" style="left:519px;top:219px;width:1px;height:5px;background:#fff"></div><div class="a" style="left:525px;top:219px;width:1px;height:5px;background:#fff"></div><div class="a" style="left:531px;top:218px;width:1px;height:6px;background:#fff"></div><div class="a" style="left:537px;top:219px;width:1px;height:5px;background:#fff"></div><div class="a" style="left:543px;top:219px;width:1px;height:5px;background:#fff"></div><div class="a" style="left:549px;top:219px;width:1px;height:5px;background:#fff"></div><div class="a" style="left:555px;top:219px;width:1px;height:5px;background:#fff"></div><div class="a" style="left:561px;top:215px;width:1px;height:9px;background:#fff"></div><div class="a" style="left:567px;top:219px;width:1px;height:5px;background:#fff"></div><div class="a" style="left:573px;top:219px;width:1px;height:5px;background:#fff"></div><div class="a" style="left:579px;top:219px;width:1px;height:5px;background:#fff"></div><div class="a" style="left:585px;top:219px;width:1px;height:5px;background:#fff"></div><div class="a" style="left:591px;top:218px;width:1px;height:6px;background:#fff"></div><div class="a" style="left:597px;top:219px;width:1px;height:5px;background:#fff"></div><div class="a" style="left:603px;top:219px;width:1px;height:5px;background:#fff"></div><div class="a" style="left:609px;top:219px;width:1px;height:5px;background:#fff"></div><div class="a" style="left:615px;top:219px;width:1px;height:5px;background:#fff"></div><div class="a" style="left:621px;top:215px;width:1px;height:9px;background:#fff"></div><div class="a" style="left:627px;top:219px;width:1px;height:5px;background:#fff"></div><div class="a" style="left:633px;top:219px;width:1px;height:5px;background:#fff"></div><div class="a" style="left:639px;top:219px;width:1px;height:5px;background:#fff"></div><div class="a" style="left:645px;top:219px;width:1px;height:5px;background:#fff"></div><div class="a" style="left:651px;top:218px;width:1px;height:6px;background:#fff"></div><div class="a" style="left:258px;top:225px;width:1px;height:305px;background:#fff"></div><div class="a" style="left:222px;top:225px;width:432px;height:305px;overflow:hidden"><div class="ln" style="left:0;top:1px;">7</div><div class="ed" style="left:39px;top:1px">#include &lt;midi_io.h&gt;            /* Original Interfaces */<svg width="6" height="12" style="vertical-align:top"><path d="M2.3 2.5 H3.7 V7 H5.3 L3 10.5 L0.7 7 H2.3Z" fill="#c82030"/></svg></div><div class="ln" style="left:0;top:13px;">8</div><div class="ed" style="left:39px;top:13px"><svg width="6" height="12" style="vertical-align:top"><path d="M2.3 2.5 H3.7 V7 H5.3 L3 10.5 L0.7 7 H2.3Z" fill="#c82030"/></svg></div><div class="ln" style="left:0;top:25px;color:#18c8c8">9</div><div class="ed c" style="left:39px;top:25px">static char disp;<svg width="6" height="12" style="vertical-align:top"><path d="M2.3 2.5 H3.7 V7 H5.3 L3 10.5 L0.7 7 H2.3Z" fill="#c82030"/></svg></div><div class="ln" style="left:0;top:37px;">10</div><div class="ed" style="left:39px;top:37px">static int ctr;<svg width="6" height="12" style="vertical-align:top"><path d="M2.3 2.5 H3.7 V7 H5.3 L3 10.5 L0.7 7 H2.3Z" fill="#c82030"/></svg></div><div class="ln" style="left:0;top:49px;">11</div><div class="ed" style="left:39px;top:49px">static long j;<svg width="6" height="12" style="vertical-align:top"><path d="M2.3 2.5 H3.7 V7 H5.3 L3 10.5 L0.7 7 H2.3Z" fill="#c82030"/></svg></div><div class="ln" style="left:0;top:61px;">12</div><div class="ed" style="left:39px;top:61px"><svg width="6" height="12" style="vertical-align:top"><path d="M2.3 2.5 H3.7 V7 H5.3 L3 10.5 L0.7 7 H2.3Z" fill="#c82030"/></svg></div><div class="ln" style="left:0;top:73px;">13</div><div class="ed" style="left:39px;top:73px">c_initial(){<svg width="6" height="12" style="vertical-align:top"><path d="M2.3 2.5 H3.7 V7 H5.3 L3 10.5 L0.7 7 H2.3Z" fill="#c82030"/></svg></div><div class="ln" style="left:0;top:85px;">14</div><div class="ed" style="left:39px;top:85px">    PB.DDR = 0xff;          /* Port [B] all output */<svg width="6" height="12" style="vertical-align:top"><path d="M2.3 2.5 H3.7 V7 H5.3 L3 10.5 L0.7 7 H2.3Z" fill="#c82030"/></svg></div><div class="ln" style="left:0;top:97px;">15</div><div class="ed" style="left:39px;top:97px">    ctr = 0;<svg width="6" height="12" style="vertical-align:top"><path d="M2.3 2.5 H3.7 V7 H5.3 L3 10.5 L0.7 7 H2.3Z" fill="#c82030"/></svg></div><div class="ln" style="left:0;top:109px;">16</div><div class="ed" style="left:39px;top:109px">    j = 0;<svg width="6" height="12" style="vertical-align:top"><path d="M2.3 2.5 H3.7 V7 H5.3 L3 10.5 L0.7 7 H2.3Z" fill="#c82030"/></svg></div><div class="ln" style="left:0;top:121px;">17</div><div class="ed" style="left:39px;top:121px">}<svg width="6" height="12" style="vertical-align:top"><path d="M2.3 2.5 H3.7 V7 H5.3 L3 10.5 L0.7 7 H2.3Z" fill="#c82030"/></svg></div><div class="ln" style="left:0;top:133px;">18</div><div class="ed" style="left:39px;top:133px"><svg width="6" height="12" style="vertical-align:top"><path d="M2.3 2.5 H3.7 V7 H5.3 L3 10.5 L0.7 7 H2.3Z" fill="#c82030"/></svg></div><div class="ln" style="left:0;top:145px;">19</div><div class="ed" style="left:39px;top:145px">c_main(){<svg width="6" height="12" style="vertical-align:top"><path d="M2.3 2.5 H3.7 V7 H5.3 L3 10.5 L0.7 7 H2.3Z" fill="#c82030"/></svg></div><div class="ln" style="left:0;top:157px;">20</div><div class="ed" style="left:39px;top:157px">    j++;<svg width="6" height="12" style="vertical-align:top"><path d="M2.3 2.5 H3.7 V7 H5.3 L3 10.5 L0.7 7 H2.3Z" fill="#c82030"/></svg></div><div class="ln" style="left:0;top:169px;">21</div><div class="ed" style="left:39px;top:169px">    if(j==80000){<svg width="6" height="12" style="vertical-align:top"><path d="M2.3 2.5 H3.7 V7 H5.3 L3 10.5 L0.7 7 H2.3Z" fill="#c82030"/></svg></div><div class="ln" style="left:0;top:181px;">22</div><div class="ed" style="left:39px;top:181px">        j = 0;<svg width="6" height="12" style="vertical-align:top"><path d="M2.3 2.5 H3.7 V7 H5.3 L3 10.5 L0.7 7 H2.3Z" fill="#c82030"/></svg></div><div class="ln" style="left:0;top:193px;">23</div><div class="ed" style="left:39px;top:193px">        ctr = (++ctr)%256;<svg width="6" height="12" style="vertical-align:top"><path d="M2.3 2.5 H3.7 V7 H5.3 L3 10.5 L0.7 7 H2.3Z" fill="#c82030"/></svg></div><div class="ln" style="left:0;top:205px;">24</div><div class="ed" style="left:39px;top:205px">        disp = (ctr&amp;1)&lt;&lt;7;<svg width="6" height="12" style="vertical-align:top"><path d="M2.3 2.5 H3.7 V7 H5.3 L3 10.5 L0.7 7 H2.3Z" fill="#c82030"/></svg></div><div class="ln" style="left:0;top:217px;">25</div><div class="ed" style="left:39px;top:217px">        PB.DR.BYTE = disp;  /* port [B] output */<svg width="6" height="12" style="vertical-align:top"><path d="M2.3 2.5 H3.7 V7 H5.3 L3 10.5 L0.7 7 H2.3Z" fill="#c82030"/></svg></div><div class="ln" style="left:0;top:229px;">26</div><div class="ed" style="left:39px;top:229px">    }<svg width="6" height="12" style="vertical-align:top"><path d="M2.3 2.5 H3.7 V7 H5.3 L3 10.5 L0.7 7 H2.3Z" fill="#c82030"/></svg></div><div class="ln" style="left:0;top:241px;">27</div><div class="ed" style="left:39px;top:241px">}<svg width="6" height="12" style="vertical-align:top"><path d="M2.3 2.5 H3.7 V7 H5.3 L3 10.5 L0.7 7 H2.3Z" fill="#c82030"/></svg></div><div class="ln" style="left:0;top:253px;">28</div><div class="ed" style="left:39px;top:253px"><svg width="6" height="12" style="vertical-align:top"><path d="M2.3 2.5 H3.7 V7 H5.3 L3 10.5 L0.7 7 H2.3Z" fill="#c82030"/></svg></div><div class="ln" style="left:0;top:265px;">29</div><div class="ed" style="left:39px;top:265px">c_midi_rx(){<svg width="6" height="12" style="vertical-align:top"><path d="M2.3 2.5 H3.7 V7 H5.3 L3 10.5 L0.7 7 H2.3Z" fill="#c82030"/></svg></div><div class="ln" style="left:0;top:277px;">30</div><div class="ed" style="left:39px;top:277px">    int i;<svg width="6" height="12" style="vertical-align:top"><path d="M2.3 2.5 H3.7 V7 H5.3 L3 10.5 L0.7 7 H2.3Z" fill="#c82030"/></svg></div><div class="ln" style="left:0;top:289px;">31</div><div class="ed" style="left:39px;top:289px">    i=status&amp;0xf0;<svg width="6" height="12" style="vertical-align:top"><path d="M2.3 2.5 H3.7 V7 H5.3 L3 10.5 L0.7 7 H2.3Z" fill="#c82030"/></svg></div><div class="ln" style="left:0;top:301px;">32</div><div class="ed" style="left:39px;top:301px">    if((i==0x80)||(i==0x90)){</div></div><div class="a" style="left:261px;top:255px;width:6px;height:6px;background:#fff;mix-blend-mode:difference"></div><div class="a" style="left:654px;top:213px;width:16px;height:317px;background:repeating-conic-gradient(#fff 0 25%,#c0c0c0 0 50%) 0 0/2px 2px"></div><div class="btn" style="left:654px;top:213px;width:16px;height:16px"></div><svg class="a" style="left:658px;top:218px" width="8" height="5"><path d="M0 4 L4 0 L8 4Z" fill="#000"/></svg><div class="btn" style="left:654px;top:229px;width:16px;height:143px"></div><div class="btn" style="left:654px;top:514px;width:16px;height:16px"></div><svg class="a" style="left:658px;top:520px" width="8" height="5"><path d="M0 0 L4 4 L8 0Z" fill="#000"/></svg><div class="a" style="left:40px;top:538px;width:640px;height:25px;background:#f0f0f0;border-bottom:1px solid #000;box-shadow:inset 0 1px #fff"></div><div class="a" style="left:46px;top:541px;width:115px;height:19px;background:#eee;border:1px solid #000;border-radius:3px;box-shadow:1px 1px #000"></div><div class="a" style="left:50px;top:544px;width:14px;height:12px;background:#a0a0f0;border:1px solid #000;border-radius:2px"></div><div class="t fit" style="left:95px;top:546px;font-size:10px;color:#000;--w:34;">フル画面</div><div class="a" style="left:168px;top:541px;width:115px;height:19px;background:#eee;border:1px solid #999;border-radius:3px;box-shadow:1px 1px #999"></div><div class="a" style="left:172px;top:544px;width:11px;height:12px;background:#eee;border:1px solid #999"></div><div class="t fit" style="left:188px;top:546px;font-size:10px;color:#888;--w:91;">フロッピーの取り出し</div><div class="a" style="left:290px;top:541px;width:115px;height:19px;background:#eee;border:1px solid #000;border-radius:3px;box-shadow:1px 1px #000"></div><div class="a" style="left:294px;top:545px;width:15px;height:11px;background:#c8c0f0;border:1px solid #000;border-radius:2px 2px 0 0"></div><div class="t fit" style="left:338px;top:546px;font-size:10px;color:#000;--w:34;">フォルダ</div><div class="a" style="left:530px;top:539px;width:1px;height:24px;background:#000"></div><div class="a" style="left:535px;top:544px;width:10px;height:3px;background:#000"></div><div class="t fit" style="left:549px;top:541px;font-size:8px;--w:45;">ハードディスク</div><div class="a" style="left:607px;top:544px;width:10px;height:3px;background:#000"></div><div class="t fit" style="left:622px;top:541px;font-size:8px;--w:30;">フロッピー</div><script>
(function(){function f(sel,pre){var l=document.querySelectorAll(sel);for(var i=0;i<l.length;i++){var e=l[i];var w=parseFloat(getComputedStyle(e).getPropertyValue('--w'));var n=e.getBoundingClientRect().width;if(w&&n){e.style.transform=pre+'scaleX('+(w/n)+')';}}}
f('.fit','');f('.fc','translateX(-50%) ');})();
</script>
</body></html>
